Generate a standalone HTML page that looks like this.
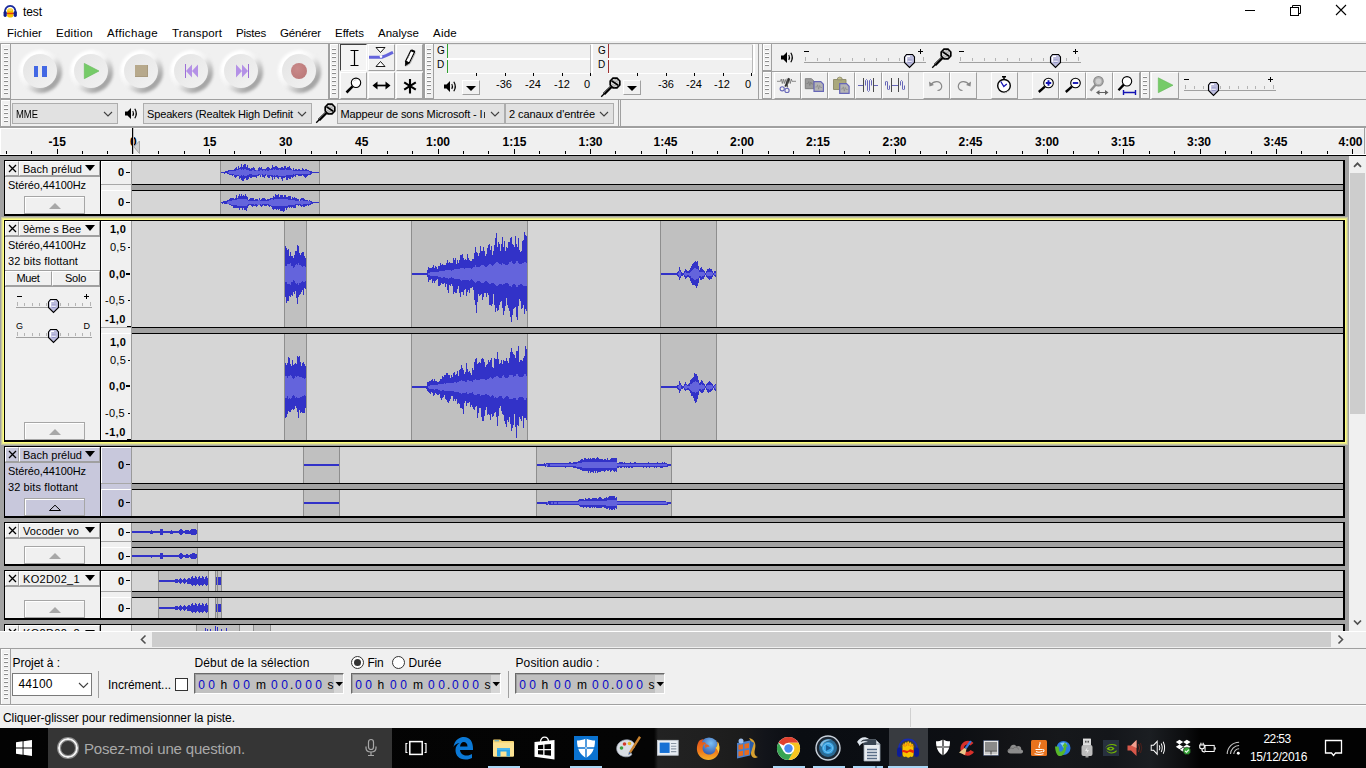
<!DOCTYPE html>
<html lang="fr"><head><meta charset="utf-8"><title>test</title>
<style>
html,body{margin:0;padding:0}
body{width:1366px;height:768px;overflow:hidden;background:#f0f0f0;position:relative;font-family:"Liberation Sans",sans-serif;font-size:12px;color:#000}
.t{position:absolute;white-space:nowrap}
.a{position:absolute}
.combo{position:absolute;background:#e1e1e1;border:1px solid #adadad;box-sizing:border-box}
.grab{position:absolute;box-sizing:border-box;border:1px solid #a0a0a0;background:#f0f0f0;box-shadow:inset 1px 1px 0 #fff}
.tb{position:absolute;box-sizing:border-box;border:1px solid #a0a0a0}
.btn{position:absolute;box-sizing:border-box;background:#f0f0f0;border:1px solid;border-color:#fff #a0a0a0 #a0a0a0 #fff}
.rb{position:absolute;width:34px;height:34px;border-radius:50%;background:linear-gradient(135deg,#e6e6e6 15%,#f0f0f0 85%)}
.rbo{position:absolute;width:43px;height:43px;border-radius:50%;background:linear-gradient(135deg,#ffffff 25%,#f2f2f2 50%,#a4a4a4 78%);filter:blur(1.5px)}
</style></head>
<body>
<div style="position:absolute;left:0px;top:0px;width:1366px;height:41px;background:#fff"></div>
<svg style="position:absolute;left:3px;top:5px;" width="15" height="14" viewBox="0 0 15 14"><g transform="scale(0.9)">
<path d="M2.2 10.5 C1.2 3.5 5 1 8 1 C11 1 14.8 3.5 13.8 10.5" fill="none" stroke="#1a2a9c" stroke-width="2"/>
<rect x="4.6" y="4.2" width="6.8" height="9.6" rx="2.2" fill="#f7c400"/>
<rect x="5.4" y="3.6" width="5.2" height="3" rx="1.5" fill="#f9d84a"/>
<rect x="3.8" y="8.6" width="8.4" height="1.6" fill="#e8380d"/>
<rect x="0.6" y="6.6" width="3.6" height="6.6" rx="1.7" fill="#12208c"/>
<rect x="11.8" y="6.6" width="3.6" height="6.6" rx="1.7" fill="#12208c"/></g>
</svg>
<div class="t" style="left:23px;top:5px;font-size:12px;line-height:14px;color:#000;letter-spacing:-0.085px;">test</div>
<div style="position:absolute;left:1245px;top:10px;width:10px;height:1px;background:#000"></div>
<svg style="position:absolute;left:1289px;top:4px;" width="13" height="13" viewBox="0 0 13 13"><path d="M3.5 3.5 V1.5 H11.5 V9.5 H9.5" fill="none" stroke="#000" stroke-width="1"/><rect x="1.5" y="3.5" width="8" height="8" fill="none" stroke="#000" stroke-width="1"/></svg>
<svg style="position:absolute;left:1335px;top:4px;" width="12" height="12" viewBox="0 0 12 12"><path d="M1 1 L11 11 M11 1 L1 11" fill="none" stroke="#000" stroke-width="1.1"/></svg>
<div class="t" style="left:7px;top:27px;font-size:11.5px;line-height:12px;color:#000;letter-spacing:0.070px;">Fichier</div>
<div class="t" style="left:56px;top:27px;font-size:11.5px;line-height:12px;color:#000;letter-spacing:0.262px;">Edition</div>
<div class="t" style="left:107px;top:27px;font-size:11.5px;line-height:12px;color:#000;letter-spacing:0.362px;">Affichage</div>
<div class="t" style="left:172px;top:27px;font-size:11.5px;line-height:12px;color:#000;letter-spacing:0.135px;">Transport</div>
<div class="t" style="left:236px;top:27px;font-size:11.5px;line-height:12px;color:#000;letter-spacing:-0.219px;">Pistes</div>
<div class="t" style="left:280px;top:27px;font-size:11.5px;line-height:12px;color:#000;letter-spacing:-0.170px;">Générer</div>
<div class="t" style="left:335px;top:27px;font-size:11.5px;line-height:12px;color:#000;letter-spacing:-0.032px;">Effets</div>
<div class="t" style="left:378px;top:27px;font-size:11.5px;line-height:12px;color:#000;letter-spacing:0.012px;">Analyse</div>
<div class="t" style="left:433px;top:27px;font-size:11.5px;line-height:12px;color:#000;letter-spacing:0.246px;">Aide</div>
<div style="position:absolute;left:0px;top:43px;width:1366px;height:1px;background:#a0a0a0"></div>
<div style="position:absolute;left:0px;top:43px;width:329px;height:57px;border:1px solid #a0a0a0;box-sizing:border-box"></div>
<div class="grab" style="left:0px;top:43px;width:11px;height:56px"><div class="a" style="left:3px;top:5px;width:4px;height:1px;background:#8c8c8c"></div><div class="a" style="left:3px;top:4px;width:4px;height:1px;background:#fff"></div><div class="a" style="left:3px;top:9px;width:4px;height:1px;background:#8c8c8c"></div><div class="a" style="left:3px;top:8px;width:4px;height:1px;background:#fff"></div><div class="a" style="left:3px;top:13px;width:4px;height:1px;background:#8c8c8c"></div><div class="a" style="left:3px;top:12px;width:4px;height:1px;background:#fff"></div><div class="a" style="left:3px;top:17px;width:4px;height:1px;background:#8c8c8c"></div><div class="a" style="left:3px;top:16px;width:4px;height:1px;background:#fff"></div><div class="a" style="left:3px;top:21px;width:4px;height:1px;background:#8c8c8c"></div><div class="a" style="left:3px;top:20px;width:4px;height:1px;background:#fff"></div><div class="a" style="left:3px;top:25px;width:4px;height:1px;background:#8c8c8c"></div><div class="a" style="left:3px;top:24px;width:4px;height:1px;background:#fff"></div><div class="a" style="left:3px;top:29px;width:4px;height:1px;background:#8c8c8c"></div><div class="a" style="left:3px;top:28px;width:4px;height:1px;background:#fff"></div><div class="a" style="left:3px;top:33px;width:4px;height:1px;background:#8c8c8c"></div><div class="a" style="left:3px;top:32px;width:4px;height:1px;background:#fff"></div><div class="a" style="left:3px;top:37px;width:4px;height:1px;background:#8c8c8c"></div><div class="a" style="left:3px;top:36px;width:4px;height:1px;background:#fff"></div><div class="a" style="left:3px;top:41px;width:4px;height:1px;background:#8c8c8c"></div><div class="a" style="left:3px;top:40px;width:4px;height:1px;background:#fff"></div><div class="a" style="left:3px;top:45px;width:4px;height:1px;background:#8c8c8c"></div><div class="a" style="left:3px;top:44px;width:4px;height:1px;background:#fff"></div><div class="a" style="left:3px;top:49px;width:4px;height:1px;background:#8c8c8c"></div><div class="a" style="left:3px;top:48px;width:4px;height:1px;background:#fff"></div></div>
<div class="rbo" style="left:19px;top:50px"></div><div class="rb" style="left:23px;top:54px"></div>
<div class="rbo" style="left:70px;top:50px"></div><div class="rb" style="left:74px;top:54px"></div>
<div class="rbo" style="left:120px;top:50px"></div><div class="rb" style="left:124px;top:54px"></div>
<div class="rbo" style="left:170px;top:50px"></div><div class="rb" style="left:174px;top:54px"></div>
<div class="rbo" style="left:220px;top:50px"></div><div class="rb" style="left:224px;top:54px"></div>
<div class="rbo" style="left:278px;top:50px"></div><div class="rb" style="left:282px;top:54px"></div>
<div style="position:absolute;left:34px;top:66px;width:4px;height:11px;background:#4368e4"></div>
<div style="position:absolute;left:42px;top:66px;width:5px;height:11px;background:#4368e4"></div>
<svg style="position:absolute;left:82px;top:61px;" width="20" height="20" viewBox="0 0 20 20"><path d="M2.3 2.4 L17 10 L2.3 17.7 Z" fill="#76cb68" stroke="#62b855" stroke-width="0.6"/></svg>
<div style="position:absolute;left:135px;top:65px;width:13px;height:12px;background:#b7a98c;border-bottom:1px solid #a89a7e;border-right:1px solid #a89a7e;box-sizing:border-box"></div>
<svg style="position:absolute;left:183px;top:62px;" width="18" height="18" viewBox="0 0 18 18"><path d="M2.5 2 V16" stroke="#9d6fd8" stroke-width="1"/><path d="M3 9 L9 2.5 V15.5 Z M9 9 L15 2.5 V15.5 Z" fill="#b491e6"/></svg>
<svg style="position:absolute;left:233px;top:62px;" width="18" height="18" viewBox="0 0 18 18"><path d="M15.5 2 V16" stroke="#9d6fd8" stroke-width="1"/><path d="M15 9 L9 2.5 V15.5 Z M9 9 L3 2.5 V15.5 Z" fill="#b491e6"/></svg>
<div class="a" style="left:291px;top:63px;width:16px;height:16px;border-radius:50%;background:radial-gradient(circle at 40% 35%,#c98a8a,#bd7b7b 70%,#a86a6a)"></div>
<div style="position:absolute;left:329px;top:43px;width:95px;height:57px;border:1px solid #a0a0a0;box-sizing:border-box"></div>
<div class="grab" style="left:329px;top:43px;width:10px;height:56px"><div class="a" style="left:2px;top:5px;width:4px;height:1px;background:#8c8c8c"></div><div class="a" style="left:2px;top:4px;width:4px;height:1px;background:#fff"></div><div class="a" style="left:2px;top:9px;width:4px;height:1px;background:#8c8c8c"></div><div class="a" style="left:2px;top:8px;width:4px;height:1px;background:#fff"></div><div class="a" style="left:2px;top:13px;width:4px;height:1px;background:#8c8c8c"></div><div class="a" style="left:2px;top:12px;width:4px;height:1px;background:#fff"></div><div class="a" style="left:2px;top:17px;width:4px;height:1px;background:#8c8c8c"></div><div class="a" style="left:2px;top:16px;width:4px;height:1px;background:#fff"></div><div class="a" style="left:2px;top:21px;width:4px;height:1px;background:#8c8c8c"></div><div class="a" style="left:2px;top:20px;width:4px;height:1px;background:#fff"></div><div class="a" style="left:2px;top:25px;width:4px;height:1px;background:#8c8c8c"></div><div class="a" style="left:2px;top:24px;width:4px;height:1px;background:#fff"></div><div class="a" style="left:2px;top:29px;width:4px;height:1px;background:#8c8c8c"></div><div class="a" style="left:2px;top:28px;width:4px;height:1px;background:#fff"></div><div class="a" style="left:2px;top:33px;width:4px;height:1px;background:#8c8c8c"></div><div class="a" style="left:2px;top:32px;width:4px;height:1px;background:#fff"></div><div class="a" style="left:2px;top:37px;width:4px;height:1px;background:#8c8c8c"></div><div class="a" style="left:2px;top:36px;width:4px;height:1px;background:#fff"></div><div class="a" style="left:2px;top:41px;width:4px;height:1px;background:#8c8c8c"></div><div class="a" style="left:2px;top:40px;width:4px;height:1px;background:#fff"></div><div class="a" style="left:2px;top:45px;width:4px;height:1px;background:#8c8c8c"></div><div class="a" style="left:2px;top:44px;width:4px;height:1px;background:#fff"></div><div class="a" style="left:2px;top:49px;width:4px;height:1px;background:#8c8c8c"></div><div class="a" style="left:2px;top:48px;width:4px;height:1px;background:#fff"></div></div>
<div style="position:absolute;left:340px;top:44px;width:27px;height:27px;box-sizing:border-box;background:#f4f4f4;border:1px solid;border-color:#404040 #fff #fff #404040"></div>
<div class="btn" style="position:absolute;left:368px;top:44px;width:27px;height:27px;"></div>
<div class="btn" style="position:absolute;left:396px;top:44px;width:27px;height:27px;"></div>
<div class="btn" style="position:absolute;left:340px;top:72px;width:27px;height:27px;"></div>
<div class="btn" style="position:absolute;left:368px;top:72px;width:27px;height:27px;"></div>
<div class="btn" style="position:absolute;left:396px;top:72px;width:27px;height:27px;"></div>
<svg style="position:absolute;left:340px;top:44px;" width="27" height="27" viewBox="0 0 27 27"><path d="M10.5 6.5 H18.5 M10.5 21.5 H18.5 M14.5 6.5 V21.5" stroke="#000" stroke-width="1.2" fill="none"/></svg>
<svg style="position:absolute;left:368px;top:44px;" width="27" height="27" viewBox="0 0 27 27"><path d="M8 3.500 H17 L12.500 8.500 Z M8 22.500 H17 L12.500 17.500 Z" fill="#fff" stroke="#000" stroke-width="0.900"/><path d="M1 13.300 H12.500 C16 13.300 20 10.500 25 8.300" stroke="#6464dc" stroke-width="3" fill="none"/><circle cx="13" cy="12.600" r="1.300" fill="#fff"/></svg>
<svg style="position:absolute;left:396px;top:44px;" width="27" height="27" viewBox="0 0 27 27"><path d="M14.800 6.500 L18.500 8.300 L13.300 19 L9.600 17.200 Z" fill="#fff" stroke="#000" stroke-width="1.200"/><path d="M9.600 17.200 L13.300 19 L9.400 21.800 Z" fill="#000" stroke="#000" stroke-width="0.800"/><path d="M15.300 6 L19 7.800" stroke="#000" stroke-width="1.800"/><path d="M12.500 11 L14 11.800 M11.500 13 L13 13.800" stroke="#909090" stroke-width="0.700"/><path d="M19.300 9 L14.200 19.500 L10.500 22" stroke="#a0a0a0" stroke-width="0.800" fill="none"/></svg>
<svg style="position:absolute;left:340px;top:72px;" width="27" height="27" viewBox="0 0 27 27"><path d="M12.600 14.300 L6.500 20.500" stroke="#000" stroke-width="2.500"/><circle cx="16" cy="10.800" r="4.700" fill="#fff" stroke="#000" stroke-width="1.100"/><path d="M13.500 9.500 Q14.500 7.500 16.500 7.800" stroke="#c0c0c0" stroke-width="0.800" fill="none"/></svg>
<svg style="position:absolute;left:368px;top:72px;" width="27" height="27" viewBox="0 0 27 27"><path d="M6 13.500 H21" stroke="#000" stroke-width="1.700"/><path d="M4.500 13.500 L9.500 9.500 V17.500 Z M22.500 13.500 L17.500 9.500 V17.500 Z" fill="#000"/></svg>
<svg style="position:absolute;left:396px;top:72px;" width="27" height="27" viewBox="0 0 27 27"><path d="M14 7 V21.500 M8.200 10.300 L19.800 17.700 M19.800 10.300 L8.200 17.700" stroke="#000" stroke-width="2.100" fill="none"/></svg>
<div style="position:absolute;left:424px;top:43px;width:335px;height:57px;border:1px solid #a0a0a0;box-sizing:border-box"></div>
<div class="grab" style="left:424px;top:43px;width:10px;height:56px"><div class="a" style="left:2px;top:5px;width:4px;height:1px;background:#8c8c8c"></div><div class="a" style="left:2px;top:4px;width:4px;height:1px;background:#fff"></div><div class="a" style="left:2px;top:9px;width:4px;height:1px;background:#8c8c8c"></div><div class="a" style="left:2px;top:8px;width:4px;height:1px;background:#fff"></div><div class="a" style="left:2px;top:13px;width:4px;height:1px;background:#8c8c8c"></div><div class="a" style="left:2px;top:12px;width:4px;height:1px;background:#fff"></div><div class="a" style="left:2px;top:17px;width:4px;height:1px;background:#8c8c8c"></div><div class="a" style="left:2px;top:16px;width:4px;height:1px;background:#fff"></div><div class="a" style="left:2px;top:21px;width:4px;height:1px;background:#8c8c8c"></div><div class="a" style="left:2px;top:20px;width:4px;height:1px;background:#fff"></div><div class="a" style="left:2px;top:25px;width:4px;height:1px;background:#8c8c8c"></div><div class="a" style="left:2px;top:24px;width:4px;height:1px;background:#fff"></div><div class="a" style="left:2px;top:29px;width:4px;height:1px;background:#8c8c8c"></div><div class="a" style="left:2px;top:28px;width:4px;height:1px;background:#fff"></div><div class="a" style="left:2px;top:33px;width:4px;height:1px;background:#8c8c8c"></div><div class="a" style="left:2px;top:32px;width:4px;height:1px;background:#fff"></div><div class="a" style="left:2px;top:37px;width:4px;height:1px;background:#8c8c8c"></div><div class="a" style="left:2px;top:36px;width:4px;height:1px;background:#fff"></div><div class="a" style="left:2px;top:41px;width:4px;height:1px;background:#8c8c8c"></div><div class="a" style="left:2px;top:40px;width:4px;height:1px;background:#fff"></div><div class="a" style="left:2px;top:45px;width:4px;height:1px;background:#8c8c8c"></div><div class="a" style="left:2px;top:44px;width:4px;height:1px;background:#fff"></div><div class="a" style="left:2px;top:49px;width:4px;height:1px;background:#8c8c8c"></div><div class="a" style="left:2px;top:48px;width:4px;height:1px;background:#fff"></div></div>
<div class="t" style="left:437px;top:45px;font-size:10px;line-height:11px;color:#000;">G</div><div class="t" style="left:437px;top:59px;font-size:10px;line-height:11px;color:#000;">D</div><div style="position:absolute;left:447px;top:58px;width:146px;height:2px;background:#fff"></div><div style="position:absolute;left:447px;top:73px;width:146px;height:1px;background:#fff"></div><div style="position:absolute;left:591px;top:44px;width:2px;height:30px;background:#fff"></div><div style="position:absolute;left:590px;top:44px;width:1px;height:29px;background:#b8b8b8"></div><div style="position:absolute;left:447px;top:44px;width:144px;height:1px;background:#e4e4e4"></div><div style="position:absolute;left:447px;top:44px;width:1px;height:14px;background:#2ea02e"></div><div style="position:absolute;left:447px;top:60px;width:1px;height:13px;background:#2ea02e"></div>
<div class="t" style="left:598px;top:45px;font-size:10px;line-height:11px;color:#000;">G</div><div class="t" style="left:598px;top:59px;font-size:10px;line-height:11px;color:#000;">D</div><div style="position:absolute;left:608px;top:58px;width:147px;height:2px;background:#fff"></div><div style="position:absolute;left:608px;top:73px;width:147px;height:1px;background:#fff"></div><div style="position:absolute;left:753px;top:44px;width:2px;height:30px;background:#fff"></div><div style="position:absolute;left:752px;top:44px;width:1px;height:29px;background:#b8b8b8"></div><div style="position:absolute;left:608px;top:44px;width:145px;height:1px;background:#e4e4e4"></div><div style="position:absolute;left:608px;top:44px;width:1px;height:14px;background:#a03030"></div><div style="position:absolute;left:608px;top:60px;width:1px;height:13px;background:#a03030"></div>
<div style="position:absolute;left:476px;top:73px;width:1px;height:3px;background:#000"></div>
<div style="position:absolute;left:505px;top:73px;width:1px;height:3px;background:#000"></div>
<div style="position:absolute;left:533px;top:73px;width:1px;height:3px;background:#000"></div>
<div style="position:absolute;left:562px;top:73px;width:1px;height:3px;background:#000"></div>
<div style="position:absolute;left:590px;top:73px;width:1px;height:3px;background:#000"></div>
<div style="position:absolute;left:637px;top:73px;width:1px;height:3px;background:#000"></div>
<div style="position:absolute;left:666px;top:73px;width:1px;height:3px;background:#000"></div>
<div style="position:absolute;left:694px;top:73px;width:1px;height:3px;background:#000"></div>
<div style="position:absolute;left:723px;top:73px;width:1px;height:3px;background:#000"></div>
<div style="position:absolute;left:751px;top:73px;width:1px;height:3px;background:#000"></div>
<div class="t" style="left:496px;top:78px;font-size:11px;line-height:12px;color:#000;">-36</div>
<div class="t" style="left:525px;top:78px;font-size:11px;line-height:12px;color:#000;">-24</div>
<div class="t" style="left:554px;top:78px;font-size:11px;line-height:12px;color:#000;">-12</div>
<div class="t" style="left:584px;top:78px;font-size:11px;line-height:12px;color:#000;">0</div>
<div class="t" style="left:658px;top:78px;font-size:11px;line-height:12px;color:#000;">-36</div>
<div class="t" style="left:686px;top:78px;font-size:11px;line-height:12px;color:#000;">-24</div>
<div class="t" style="left:714px;top:78px;font-size:11px;line-height:12px;color:#000;">-12</div>
<div class="t" style="left:745px;top:78px;font-size:11px;line-height:12px;color:#000;">0</div>
<svg style="position:absolute;left:443px;top:80px;" width="15" height="13" viewBox="0 0 15 13"><path d="M1 4.5 H3.5 L7 1 V12 L3.5 8.5 H1 Z" fill="#000"/><path d="M8.8 4 Q10.2 6.5 8.8 9" stroke="#000" stroke-width="1.1" fill="none"/><path d="M10.8 1.8 Q13.8 6.5 10.8 11.2" stroke="#000" stroke-width="1.2" fill="none"/></svg>
<svg style="position:absolute;left:600px;top:77px;" width="21" height="21" viewBox="0 0 21 21"><path d="M11.300 9.700 L4 17" stroke="#000" stroke-width="3"/><path d="M4.500 16.500 L1.200 19.800" stroke="#000" stroke-width="1.300"/><path d="M10.600 9.400 L3.800 16.200" stroke="#fff" stroke-width="0.700" stroke-dasharray="0.800 0.800"/><path d="M13 1.200 H17 L19.800 4 V8 L17 10.800 H13 L10.200 8 V4 Z" fill="#e0e0e0" stroke="#000" stroke-width="1.700"/><path d="M11.600 3.800 L18.200 8.200" stroke="#000" stroke-width="1.900"/><path d="M12.500 3.300 L18.300 5.300 M14.300 2.200 L18.500 3.700 M11.500 7.300 L17 9.200 M12.800 9.200 L15 10" stroke="#8c8c8c" stroke-width="0.700"/></svg>
<div style="position:absolute;left:462px;top:80px;width:18px;height:15px;box-sizing:border-box;border:1px solid;border-color:#fff #a0a0a0 #a0a0a0 #fff"><div class="a" style="left:3px;top:5px;width:0;height:0;border-left:5px solid transparent;border-right:5px solid transparent;border-top:5px solid #000"></div></div>
<div style="position:absolute;left:623px;top:80px;width:18px;height:15px;box-sizing:border-box;border:1px solid;border-color:#fff #a0a0a0 #a0a0a0 #fff"><div class="a" style="left:3px;top:5px;width:0;height:0;border-left:5px solid transparent;border-right:5px solid transparent;border-top:5px solid #000"></div></div>
<div style="position:absolute;left:762px;top:43px;width:604px;height:29px;border:1px solid #a0a0a0;border-right:none;box-sizing:border-box"></div>
<div class="grab" style="left:762px;top:43px;width:10px;height:28px"><div class="a" style="left:2px;top:5px;width:4px;height:1px;background:#8c8c8c"></div><div class="a" style="left:2px;top:4px;width:4px;height:1px;background:#fff"></div><div class="a" style="left:2px;top:9px;width:4px;height:1px;background:#8c8c8c"></div><div class="a" style="left:2px;top:8px;width:4px;height:1px;background:#fff"></div><div class="a" style="left:2px;top:13px;width:4px;height:1px;background:#8c8c8c"></div><div class="a" style="left:2px;top:12px;width:4px;height:1px;background:#fff"></div><div class="a" style="left:2px;top:17px;width:4px;height:1px;background:#8c8c8c"></div><div class="a" style="left:2px;top:16px;width:4px;height:1px;background:#fff"></div><div class="a" style="left:2px;top:21px;width:4px;height:1px;background:#8c8c8c"></div><div class="a" style="left:2px;top:20px;width:4px;height:1px;background:#fff"></div></div>
<svg style="position:absolute;left:780px;top:51px;" width="15" height="13" viewBox="0 0 15 13"><path d="M1 4.5 H3.5 L7 1 V12 L3.5 8.5 H1 Z" fill="#000"/><path d="M8.8 4 Q10.2 6.5 8.8 9" stroke="#000" stroke-width="1.1" fill="none"/><path d="M10.8 1.8 Q13.8 6.5 10.8 11.2" stroke="#000" stroke-width="1.2" fill="none"/></svg>
<svg style="position:absolute;left:931px;top:48px;" width="21" height="21" viewBox="0 0 21 21"><path d="M11.300 9.700 L4 17" stroke="#000" stroke-width="3"/><path d="M4.500 16.500 L1.200 19.800" stroke="#000" stroke-width="1.300"/><path d="M10.600 9.400 L3.800 16.200" stroke="#fff" stroke-width="0.700" stroke-dasharray="0.800 0.800"/><path d="M13 1.200 H17 L19.800 4 V8 L17 10.800 H13 L10.200 8 V4 Z" fill="#e0e0e0" stroke="#000" stroke-width="1.700"/><path d="M11.600 3.800 L18.200 8.200" stroke="#000" stroke-width="1.900"/><path d="M12.500 3.300 L18.300 5.300 M14.300 2.200 L18.500 3.700 M11.500 7.300 L17 9.200 M12.800 9.200 L15 10" stroke="#8c8c8c" stroke-width="0.700"/></svg>
<div style="position:absolute;left:804px;top:62px;width:122px;height:1px;background:#a0a0a0"></div><div style="position:absolute;left:805px;top:57px;width:1px;height:4px;background:#b4b4b4"></div><div style="position:absolute;left:817px;top:58px;width:1px;height:3px;background:#b4b4b4"></div><div style="position:absolute;left:829px;top:58px;width:1px;height:3px;background:#b4b4b4"></div><div style="position:absolute;left:840px;top:58px;width:1px;height:3px;background:#b4b4b4"></div><div style="position:absolute;left:852px;top:58px;width:1px;height:3px;background:#b4b4b4"></div><div style="position:absolute;left:864px;top:58px;width:1px;height:3px;background:#b4b4b4"></div><div style="position:absolute;left:876px;top:58px;width:1px;height:3px;background:#b4b4b4"></div><div style="position:absolute;left:888px;top:58px;width:1px;height:3px;background:#b4b4b4"></div><div style="position:absolute;left:899px;top:58px;width:1px;height:3px;background:#b4b4b4"></div><div style="position:absolute;left:911px;top:58px;width:1px;height:3px;background:#b4b4b4"></div><div style="position:absolute;left:923px;top:57px;width:1px;height:4px;background:#b4b4b4"></div><div style="position:absolute;left:804px;top:51px;width:5px;height:1px;background:#000"></div><div style="position:absolute;left:918px;top:51px;width:5px;height:1px;background:#000"></div><div style="position:absolute;left:920px;top:49px;width:1px;height:5px;background:#000"></div><svg style="position:absolute;left:903px;top:53px;" width="13" height="16" viewBox="0 0 13 16"><path d="M1.500 4 L3.500 1.500 H9.500 L11.500 4 V9.500 L6.500 14.500 L1.500 9.500 Z" fill="#bcbcdc" stroke="#000" stroke-width="1.100"/><path d="M2.700 4.300 L4 2.700 H7 V4 H4.200 V9.500 L2.700 8.500 Z" fill="#fff"/><path d="M4.700 7 H8.700 M4.700 9.500 H8.700" stroke="#9292c4" stroke-width="0.900"/><path d="M4.700 8.250 H8.700" stroke="#f4f4fc" stroke-width="1"/></svg>
<div style="position:absolute;left:959px;top:62px;width:122px;height:1px;background:#a0a0a0"></div><div style="position:absolute;left:960px;top:57px;width:1px;height:4px;background:#b4b4b4"></div><div style="position:absolute;left:972px;top:58px;width:1px;height:3px;background:#b4b4b4"></div><div style="position:absolute;left:984px;top:58px;width:1px;height:3px;background:#b4b4b4"></div><div style="position:absolute;left:995px;top:58px;width:1px;height:3px;background:#b4b4b4"></div><div style="position:absolute;left:1007px;top:58px;width:1px;height:3px;background:#b4b4b4"></div><div style="position:absolute;left:1019px;top:58px;width:1px;height:3px;background:#b4b4b4"></div><div style="position:absolute;left:1031px;top:58px;width:1px;height:3px;background:#b4b4b4"></div><div style="position:absolute;left:1043px;top:58px;width:1px;height:3px;background:#b4b4b4"></div><div style="position:absolute;left:1054px;top:58px;width:1px;height:3px;background:#b4b4b4"></div><div style="position:absolute;left:1066px;top:58px;width:1px;height:3px;background:#b4b4b4"></div><div style="position:absolute;left:1078px;top:57px;width:1px;height:4px;background:#b4b4b4"></div><div style="position:absolute;left:959px;top:51px;width:5px;height:1px;background:#000"></div><div style="position:absolute;left:1073px;top:51px;width:5px;height:1px;background:#000"></div><div style="position:absolute;left:1075px;top:49px;width:1px;height:5px;background:#000"></div><svg style="position:absolute;left:1049px;top:53px;" width="13" height="16" viewBox="0 0 13 16"><path d="M1.500 4 L3.500 1.500 H9.500 L11.500 4 V9.500 L6.500 14.500 L1.500 9.500 Z" fill="#bcbcdc" stroke="#000" stroke-width="1.100"/><path d="M2.700 4.300 L4 2.700 H7 V4 H4.200 V9.500 L2.700 8.500 Z" fill="#fff"/><path d="M4.700 7 H8.700 M4.700 9.500 H8.700" stroke="#9292c4" stroke-width="0.900"/><path d="M4.700 8.250 H8.700" stroke="#f4f4fc" stroke-width="1"/></svg>
<div style="position:absolute;left:762px;top:71px;width:379px;height:29px;border:1px solid #a0a0a0;box-sizing:border-box"></div>
<div class="grab" style="left:762px;top:71px;width:10px;height:28px"><div class="a" style="left:2px;top:5px;width:4px;height:1px;background:#8c8c8c"></div><div class="a" style="left:2px;top:4px;width:4px;height:1px;background:#fff"></div><div class="a" style="left:2px;top:9px;width:4px;height:1px;background:#8c8c8c"></div><div class="a" style="left:2px;top:8px;width:4px;height:1px;background:#fff"></div><div class="a" style="left:2px;top:13px;width:4px;height:1px;background:#8c8c8c"></div><div class="a" style="left:2px;top:12px;width:4px;height:1px;background:#fff"></div><div class="a" style="left:2px;top:17px;width:4px;height:1px;background:#8c8c8c"></div><div class="a" style="left:2px;top:16px;width:4px;height:1px;background:#fff"></div><div class="a" style="left:2px;top:21px;width:4px;height:1px;background:#8c8c8c"></div><div class="a" style="left:2px;top:20px;width:4px;height:1px;background:#fff"></div></div>
<div class="btn" style="position:absolute;left:774px;top:72px;width:27px;height:27px;"></div>
<div class="btn" style="position:absolute;left:801px;top:72px;width:27px;height:27px;"></div>
<div class="btn" style="position:absolute;left:828px;top:72px;width:27px;height:27px;"></div>
<div class="btn" style="position:absolute;left:855px;top:72px;width:27px;height:27px;"></div>
<div class="btn" style="position:absolute;left:882px;top:72px;width:27px;height:27px;"></div>
<div class="btn" style="position:absolute;left:923px;top:72px;width:27px;height:27px;"></div>
<div class="btn" style="position:absolute;left:950px;top:72px;width:27px;height:27px;"></div>
<div class="btn" style="position:absolute;left:991px;top:72px;width:27px;height:27px;"></div>
<div class="btn" style="position:absolute;left:1032px;top:72px;width:27px;height:27px;"></div>
<div class="btn" style="position:absolute;left:1059px;top:72px;width:27px;height:27px;"></div>
<div class="btn" style="position:absolute;left:1086px;top:72px;width:27px;height:27px;"></div>
<div class="btn" style="position:absolute;left:1113px;top:72px;width:27px;height:27px;"></div>
<svg style="position:absolute;left:774px;top:72px;" width="27" height="26" viewBox="0 0 27 26"><path d="M3 9.300 H6.500 L7.300 7 L8.300 11.500 L9.300 7 L10.300 11.500 L11.300 7.500 L12.300 11 L13.300 7.500 L14.300 11.500 L15.300 7 L16.300 11.500 L17.300 7 L18 9.300 H22" stroke="#707070" stroke-width="0.800" fill="none"/><path d="M15.200 6.300 L11.300 14.600" stroke="#303030" stroke-width="2"/><path d="M13.200 6.500 L13.600 15.500" stroke="#505050" stroke-width="0.900"/><circle cx="8.200" cy="16.800" r="2.100" fill="#f0f0f0" stroke="#6666b8" stroke-width="1.100"/><circle cx="13" cy="18.400" r="2.100" fill="#f0f0f0" stroke="#6666b8" stroke-width="1.100"/></svg>
<svg style="position:absolute;left:801px;top:72px;" width="27" height="26" viewBox="0 0 27 26"><path d="M4.300 6.700 H10.500 L12.800 9 V16.700 H4.300 Z" fill="#9c9c9c" stroke="#787878" stroke-width="0.900"/><path d="M5.500 11.500 H7 L7.800 9.500 L8.800 13.500 L9.800 10 L10.800 12 H12" stroke="#7c7c7c" stroke-width="0.700" fill="none"/><path d="M13 9.700 H19.800 L22.400 12.300 V19.300 H13 Z" fill="#b4b4b4" stroke="#6666b8" stroke-width="1.200"/><path d="M14.300 15 H15.800 L16.600 12.800 L17.600 17.200 L18.600 13.500 L19.600 15.500 H21" stroke="#8a8a8a" stroke-width="0.700" fill="none"/></svg>
<svg style="position:absolute;left:828px;top:72px;" width="27" height="26" viewBox="0 0 27 26"><path d="M5.500 7.500 H18 V17.500 H5.500 Z" fill="#aaa87c" stroke="#8a8868" stroke-width="0.900"/><path d="M9.500 7.800 V6 Q11.750 4 14 6 V7.800 Z" fill="#c4c08c" stroke="#8a8868" stroke-width="0.800"/><path d="M11.700 11.700 H18.500 L21.100 14.300 V21.300 H11.700 Z" fill="#b4b4b4" stroke="#6666b8" stroke-width="1.200"/><path d="M13 17 H14.500 L15.300 14.800 L16.300 19.200 L17.300 15.500 L18.300 17.500 H19.700" stroke="#8a8a8a" stroke-width="0.700" fill="none"/></svg>
<svg style="position:absolute;left:855px;top:72px;" width="27" height="26" viewBox="0 0 27 26"><path d="M3 13.500 H8.500 M18.500 13.500 H23" stroke="#6666b8" stroke-width="1"/><path d="M8.500 6 V20 M18.500 6 V20" stroke="#4a4a4a" stroke-width="1"/><path d="M10.500 13.500 V8.500 Q11.500 6.500 12.500 8.500 V18.500 Q13.500 20.500 14.500 18.500 V8.500 Q15.500 6.500 16.500 8.500 V13.500" stroke="#6666b8" stroke-width="1" fill="none"/></svg>
<svg style="position:absolute;left:882px;top:72px;" width="27" height="26" viewBox="0 0 27 26"><path d="M9.500 13.500 H16.500" stroke="#6666b8" stroke-width="1"/><path d="M9.500 6 V20 M16.500 6 V20" stroke="#4a4a4a" stroke-width="1"/><path d="M3.500 13.500 V10 Q4.500 8 5.500 10 V17 Q6.500 19 7.500 17 V13.500 M18.500 13.500 V9.500 Q19.500 7.500 20.500 9.500 V17 Q21.500 19 22.500 17 V13.500" stroke="#6666b8" stroke-width="1" fill="none"/></svg>
<svg style="position:absolute;left:923px;top:72px;" width="27" height="26" viewBox="0 0 27 26"><path d="M8 12.500 C11 8.500 17 8.500 18.500 13 C19.500 16 17.5 18.500 14.500 18.500" stroke="#888" stroke-width="1.2" fill="none"/><path d="M6 9.500 L6.500 14.500 L11 13 Z" fill="#888"/></svg>
<svg style="position:absolute;left:950px;top:72px;" width="27" height="26" viewBox="0 0 27 26"><path d="M19 12.500 C16 8.500 10 8.500 8.500 13 C7.500 16 9.5 18.500 12.500 18.500" stroke="#888" stroke-width="1.2" fill="none"/><path d="M21 9.500 L20.500 14.500 L16 13 Z" fill="#888"/></svg>
<svg style="position:absolute;left:991px;top:72px;" width="27" height="26" viewBox="0 0 27 26"><circle cx="13" cy="13.800" r="6.300" fill="#fff" stroke="#000" stroke-width="1.400"/><path d="M13 7.500 V5 M11 4.800 H15" stroke="#000" stroke-width="1.500"/><path d="M9.800 9.500 L12.800 14.500 L15.800 12" stroke="#1414b4" stroke-width="1.300" fill="none"/><path d="M17.500 18.500 Q16 20.500 13.500 21" stroke="#b0b0b0" stroke-width="1" fill="none"/></svg>
<svg style="position:absolute;left:1032px;top:72px;" width="27" height="26" viewBox="0 0 27 26"><circle cx="16.500" cy="11" r="4.800" fill="#fff" stroke="#000" stroke-width="1.100"/><path d="M12.900 14.600 L6.800 20" stroke="#000" stroke-width="2.400"/><path d="M13.800 11 H19.200 M16.500 8.300 V13.700" stroke="#1414b4" stroke-width="1.900"/></svg>
<svg style="position:absolute;left:1059px;top:72px;" width="27" height="26" viewBox="0 0 27 26"><circle cx="16.500" cy="11" r="4.800" fill="#fff" stroke="#000" stroke-width="1.100"/><path d="M12.900 14.600 L6.800 20" stroke="#000" stroke-width="2.400"/><path d="M13.800 11 H19.200" stroke="#1414b4" stroke-width="1.900"/></svg>
<svg style="position:absolute;left:1086px;top:72px;" width="27" height="26" viewBox="0 0 27 26"><path d="M9.6 12.7 L4.5 18.8" stroke="#909090" stroke-width="2.400"/><circle cx="12.5" cy="9.2" r="4.700" fill="#b0b0b0" stroke="#8a8a8a" stroke-width="1.100"/><path d="M12 20.500 H21" stroke="#606060" stroke-width="1"/><path d="M10 20.500 L13.500 18 V23 Z M22.500 20.500 L19 18 V23 Z" fill="#606060"/><circle cx="12.500" cy="9.200" r="2.800" fill="#d0d0d0"/></svg>
<svg style="position:absolute;left:1113px;top:72px;" width="27" height="26" viewBox="0 0 27 26"><path d="M10.8 12.6 L5.5 18.2" stroke="#000" stroke-width="2.400"/><circle cx="14" cy="9.3" r="4.700" fill="#fff" stroke="#000" stroke-width="1.100"/><path d="M10.500 20.500 H22.500 M10.500 18 V23 M22.500 18 V23" stroke="#1414b4" stroke-width="1.400"/></svg>
<div style="position:absolute;left:1140px;top:71px;width:226px;height:29px;border:1px solid #a0a0a0;border-right:none;box-sizing:border-box"></div>
<div class="grab" style="left:1140px;top:71px;width:10px;height:28px"><div class="a" style="left:2px;top:5px;width:4px;height:1px;background:#8c8c8c"></div><div class="a" style="left:2px;top:4px;width:4px;height:1px;background:#fff"></div><div class="a" style="left:2px;top:9px;width:4px;height:1px;background:#8c8c8c"></div><div class="a" style="left:2px;top:8px;width:4px;height:1px;background:#fff"></div><div class="a" style="left:2px;top:13px;width:4px;height:1px;background:#8c8c8c"></div><div class="a" style="left:2px;top:12px;width:4px;height:1px;background:#fff"></div><div class="a" style="left:2px;top:17px;width:4px;height:1px;background:#8c8c8c"></div><div class="a" style="left:2px;top:16px;width:4px;height:1px;background:#fff"></div><div class="a" style="left:2px;top:21px;width:4px;height:1px;background:#8c8c8c"></div><div class="a" style="left:2px;top:20px;width:4px;height:1px;background:#fff"></div></div>
<div class="btn" style="position:absolute;left:1151px;top:72px;width:28px;height:27px;"></div>
<svg style="position:absolute;left:1155px;top:75px;" width="22" height="20" viewBox="0 0 22 20"><path d="M3.300 2.800 L18 10.200 L3.300 17.700 Z" fill="#76cb68" stroke="#62b855" stroke-width="0.600"/></svg>
<div style="position:absolute;left:1184px;top:90px;width:92px;height:1px;background:#a0a0a0"></div><div style="position:absolute;left:1185px;top:85px;width:1px;height:4px;background:#b4b4b4"></div><div style="position:absolute;left:1194px;top:86px;width:1px;height:3px;background:#b4b4b4"></div><div style="position:absolute;left:1203px;top:86px;width:1px;height:3px;background:#b4b4b4"></div><div style="position:absolute;left:1211px;top:86px;width:1px;height:3px;background:#b4b4b4"></div><div style="position:absolute;left:1220px;top:86px;width:1px;height:3px;background:#b4b4b4"></div><div style="position:absolute;left:1229px;top:86px;width:1px;height:3px;background:#b4b4b4"></div><div style="position:absolute;left:1238px;top:86px;width:1px;height:3px;background:#b4b4b4"></div><div style="position:absolute;left:1247px;top:86px;width:1px;height:3px;background:#b4b4b4"></div><div style="position:absolute;left:1255px;top:86px;width:1px;height:3px;background:#b4b4b4"></div><div style="position:absolute;left:1264px;top:86px;width:1px;height:3px;background:#b4b4b4"></div><div style="position:absolute;left:1273px;top:85px;width:1px;height:4px;background:#b4b4b4"></div><div style="position:absolute;left:1184px;top:79px;width:5px;height:1px;background:#000"></div><div style="position:absolute;left:1268px;top:79px;width:5px;height:1px;background:#000"></div><div style="position:absolute;left:1270px;top:77px;width:1px;height:5px;background:#000"></div><svg style="position:absolute;left:1207px;top:81px;" width="13" height="16" viewBox="0 0 13 16"><path d="M1.500 4 L3.500 1.500 H9.500 L11.500 4 V9.500 L6.500 14.500 L1.500 9.500 Z" fill="#bcbcdc" stroke="#000" stroke-width="1.100"/><path d="M2.700 4.300 L4 2.700 H7 V4 H4.200 V9.500 L2.700 8.500 Z" fill="#fff"/><path d="M4.700 7 H8.700 M4.700 9.500 H8.700" stroke="#9292c4" stroke-width="0.900"/><path d="M4.700 8.250 H8.700" stroke="#f4f4fc" stroke-width="1"/></svg>
<div style="position:absolute;left:0px;top:99px;width:1366px;height:1px;background:#a0a0a0"></div>
<div style="position:absolute;left:0px;top:99px;width:619px;height:28px;border:1px solid #a0a0a0;box-sizing:border-box"></div>
<div class="grab" style="left:0px;top:99px;width:11px;height:28px"><div class="a" style="left:3px;top:5px;width:4px;height:1px;background:#8c8c8c"></div><div class="a" style="left:3px;top:4px;width:4px;height:1px;background:#fff"></div><div class="a" style="left:3px;top:9px;width:4px;height:1px;background:#8c8c8c"></div><div class="a" style="left:3px;top:8px;width:4px;height:1px;background:#fff"></div><div class="a" style="left:3px;top:13px;width:4px;height:1px;background:#8c8c8c"></div><div class="a" style="left:3px;top:12px;width:4px;height:1px;background:#fff"></div><div class="a" style="left:3px;top:17px;width:4px;height:1px;background:#8c8c8c"></div><div class="a" style="left:3px;top:16px;width:4px;height:1px;background:#fff"></div><div class="a" style="left:3px;top:21px;width:4px;height:1px;background:#8c8c8c"></div><div class="a" style="left:3px;top:20px;width:4px;height:1px;background:#fff"></div></div>
<div class="combo" style="left:12px;top:103px;width:106px;height:21px"></div><div class="t" style="left:16px;top:108px;font-size:11px;line-height:12px;color:#000;transform:scaleX(0.8572);transform-origin:0 0;">MME</div><svg style="position:absolute;left:103px;top:111px;" width="10" height="7" viewBox="0 0 10 7"><path d="M1 1 L5 5 L9 1" stroke="#404040" stroke-width="1.100" fill="none"/></svg>
<svg style="position:absolute;left:124px;top:107px;" width="15" height="13" viewBox="0 0 15 13"><path d="M1 4.5 H3.5 L7 1 V12 L3.5 8.5 H1 Z" fill="#000"/><path d="M8.8 4 Q10.2 6.5 8.8 9" stroke="#000" stroke-width="1.1" fill="none"/><path d="M10.8 1.8 Q13.8 6.5 10.8 11.2" stroke="#000" stroke-width="1.2" fill="none"/></svg>
<div class="combo" style="left:143px;top:103px;width:169px;height:21px"></div><div class="t" style="left:147px;top:108px;font-size:11px;line-height:12px;color:#000;letter-spacing:-0.147px;">Speakers (Realtek High Definit</div><svg style="position:absolute;left:297px;top:111px;" width="10" height="7" viewBox="0 0 10 7"><path d="M1 1 L5 5 L9 1" stroke="#404040" stroke-width="1.100" fill="none"/></svg>
<svg style="position:absolute;left:315px;top:103px;" width="21" height="21" viewBox="0 0 21 21"><path d="M11.300 9.700 L4 17" stroke="#000" stroke-width="3"/><path d="M4.500 16.500 L1.200 19.800" stroke="#000" stroke-width="1.300"/><path d="M10.600 9.400 L3.800 16.200" stroke="#fff" stroke-width="0.700" stroke-dasharray="0.800 0.800"/><path d="M13 1.200 H17 L19.800 4 V8 L17 10.800 H13 L10.200 8 V4 Z" fill="#e0e0e0" stroke="#000" stroke-width="1.700"/><path d="M11.600 3.800 L18.200 8.200" stroke="#000" stroke-width="1.900"/><path d="M12.500 3.300 L18.300 5.300 M14.300 2.200 L18.500 3.700 M11.500 7.300 L17 9.200 M12.800 9.200 L15 10" stroke="#8c8c8c" stroke-width="0.700"/></svg>
<div class="combo" style="left:337px;top:103px;width:168px;height:21px"></div><div class="t" style="left:340.5px;top:108px;font-size:11px;line-height:12px;color:#000;letter-spacing:-0.121px;">Mappeur de sons Microsoft - I</div><svg style="position:absolute;left:490px;top:111px;" width="10" height="7" viewBox="0 0 10 7"><path d="M1 1 L5 5 L9 1" stroke="#404040" stroke-width="1.100" fill="none"/></svg>
<div style="position:absolute;left:484px;top:112px;width:1px;height:6px;background:#333"></div>
<div class="combo" style="left:505px;top:103px;width:109px;height:21px"></div><div class="t" style="left:509px;top:108px;font-size:11px;line-height:12px;color:#000;letter-spacing:-0.065px;">2 canaux d'entrée</div><svg style="position:absolute;left:599px;top:111px;" width="10" height="7" viewBox="0 0 10 7"><path d="M1 1 L5 5 L9 1" stroke="#404040" stroke-width="1.100" fill="none"/></svg>
<div style="position:absolute;left:620px;top:99px;width:1px;height:28px;background:#a0a0a0"></div>
<div style="position:absolute;left:0px;top:126px;width:1366px;height:2px;background:#a0a0a0"></div>
<div style="position:absolute;left:0px;top:128px;width:1366px;height:28px;background:#f0f0f0"></div>
<div style="position:absolute;left:0px;top:128px;width:1365px;height:1px;background:#fff"></div>
<div style="position:absolute;left:0px;top:128px;width:1px;height:27px;background:#fff"></div>
<div style="position:absolute;left:1364px;top:128px;width:1px;height:27px;background:#a0a0a0"></div>
<div style="position:absolute;left:0px;top:154px;width:1366px;height:1px;background:#fff"></div>
<div style="position:absolute;left:0px;top:155px;width:1366px;height:1px;background:#000"></div>
<svg style="position:absolute;left:0px;top:128px;" width="1366" height="26" viewBox="0 0 1366 26"><rect x="6" y="23" width="1" height="3" fill="#000"/><rect x="31" y="23" width="1" height="3" fill="#000"/><rect x="57" y="21" width="1" height="5" fill="#000"/><rect x="82" y="23" width="1" height="3" fill="#000"/><rect x="107" y="23" width="1" height="3" fill="#000"/><rect x="133" y="21" width="1" height="5" fill="#000"/><rect x="158" y="23" width="1" height="3" fill="#000"/><rect x="184" y="23" width="1" height="3" fill="#000"/><rect x="209" y="21" width="1" height="5" fill="#000"/><rect x="234" y="23" width="1" height="3" fill="#000"/><rect x="260" y="23" width="1" height="3" fill="#000"/><rect x="285" y="21" width="1" height="5" fill="#000"/><rect x="311" y="23" width="1" height="3" fill="#000"/><rect x="336" y="23" width="1" height="3" fill="#000"/><rect x="361" y="21" width="1" height="5" fill="#000"/><rect x="387" y="23" width="1" height="3" fill="#000"/><rect x="412" y="23" width="1" height="3" fill="#000"/><rect x="438" y="21" width="1" height="5" fill="#000"/><rect x="463" y="23" width="1" height="3" fill="#000"/><rect x="488" y="23" width="1" height="3" fill="#000"/><rect x="514" y="21" width="1" height="5" fill="#000"/><rect x="539" y="23" width="1" height="3" fill="#000"/><rect x="565" y="23" width="1" height="3" fill="#000"/><rect x="590" y="21" width="1" height="5" fill="#000"/><rect x="615" y="23" width="1" height="3" fill="#000"/><rect x="641" y="23" width="1" height="3" fill="#000"/><rect x="666" y="21" width="1" height="5" fill="#000"/><rect x="692" y="23" width="1" height="3" fill="#000"/><rect x="717" y="23" width="1" height="3" fill="#000"/><rect x="742" y="21" width="1" height="5" fill="#000"/><rect x="768" y="23" width="1" height="3" fill="#000"/><rect x="793" y="23" width="1" height="3" fill="#000"/><rect x="819" y="21" width="1" height="5" fill="#000"/><rect x="844" y="23" width="1" height="3" fill="#000"/><rect x="869" y="23" width="1" height="3" fill="#000"/><rect x="895" y="21" width="1" height="5" fill="#000"/><rect x="920" y="23" width="1" height="3" fill="#000"/><rect x="946" y="23" width="1" height="3" fill="#000"/><rect x="971" y="21" width="1" height="5" fill="#000"/><rect x="996" y="23" width="1" height="3" fill="#000"/><rect x="1022" y="23" width="1" height="3" fill="#000"/><rect x="1047" y="21" width="1" height="5" fill="#000"/><rect x="1073" y="23" width="1" height="3" fill="#000"/><rect x="1098" y="23" width="1" height="3" fill="#000"/><rect x="1123" y="21" width="1" height="5" fill="#000"/><rect x="1149" y="23" width="1" height="3" fill="#000"/><rect x="1174" y="23" width="1" height="3" fill="#000"/><rect x="1200" y="21" width="1" height="5" fill="#000"/><rect x="1225" y="23" width="1" height="3" fill="#000"/><rect x="1251" y="23" width="1" height="3" fill="#000"/><rect x="1276" y="21" width="1" height="5" fill="#000"/><rect x="1301" y="23" width="1" height="3" fill="#000"/><rect x="1327" y="23" width="1" height="3" fill="#000"/><rect x="1352" y="21" width="1" height="5" fill="#000"/></svg>
<div class="t" style="left:48.5px;top:135px;font-size:12px;line-height:14px;color:#000;font-weight:bold;">-15</div>
<div class="t" style="left:130.0px;top:135px;font-size:12px;line-height:14px;color:#000;font-weight:bold;">0</div>
<div class="t" style="left:203.0px;top:135px;font-size:12px;line-height:14px;color:#000;font-weight:bold;">15</div>
<div class="t" style="left:279.0px;top:135px;font-size:12px;line-height:14px;color:#000;font-weight:bold;">30</div>
<div class="t" style="left:355.0px;top:135px;font-size:12px;line-height:14px;color:#000;font-weight:bold;">45</div>
<div class="t" style="left:426.0px;top:135px;font-size:12px;line-height:14px;color:#000;font-weight:bold;">1:00</div>
<div class="t" style="left:502.5px;top:135px;font-size:12px;line-height:14px;color:#000;font-weight:bold;">1:15</div>
<div class="t" style="left:578.5px;top:135px;font-size:12px;line-height:14px;color:#000;font-weight:bold;">1:30</div>
<div class="t" style="left:653.5px;top:135px;font-size:12px;line-height:14px;color:#000;font-weight:bold;">1:45</div>
<div class="t" style="left:730.0px;top:135px;font-size:12px;line-height:14px;color:#000;font-weight:bold;">2:00</div>
<div class="t" style="left:806.0px;top:135px;font-size:12px;line-height:14px;color:#000;font-weight:bold;">2:15</div>
<div class="t" style="left:882.5px;top:135px;font-size:12px;line-height:14px;color:#000;font-weight:bold;">2:30</div>
<div class="t" style="left:958.5px;top:135px;font-size:12px;line-height:14px;color:#000;font-weight:bold;">2:45</div>
<div class="t" style="left:1035.0px;top:135px;font-size:12px;line-height:14px;color:#000;font-weight:bold;">3:00</div>
<div class="t" style="left:1111.0px;top:135px;font-size:12px;line-height:14px;color:#000;font-weight:bold;">3:15</div>
<div class="t" style="left:1187.0px;top:135px;font-size:12px;line-height:14px;color:#000;font-weight:bold;">3:30</div>
<div class="t" style="left:1263.5px;top:135px;font-size:12px;line-height:14px;color:#000;font-weight:bold;">3:45</div>
<div class="t" style="left:1338.5px;top:135px;font-size:12px;line-height:14px;color:#000;font-weight:bold;">4:00</div>
<div style="position:absolute;left:132px;top:128px;width:1px;height:26px;background:#000"></div>
<div style="position:absolute;left:133px;top:128px;width:1px;height:26px;background:#c0c0c0"></div>
<svg style="position:absolute;left:133px;top:140px;" width="8" height="15" viewBox="0 0 8 15"><path d="M0.800 6.800 L6.500 1 V13.500 Z" fill="#d2d2d2" stroke="#a0a0a0" stroke-width="0.900"/></svg>
<div style="position:absolute;left:0px;top:156px;width:1349px;height:475px;background:#a2a2a2"></div>
<div style="position:absolute;left:4px;top:160px;width:1341px;height:56px;background:#000"></div><div style="position:absolute;left:5px;top:161px;width:95px;height:53px;background:#f0f0f0"></div><div style="position:absolute;left:101px;top:161px;width:30px;height:53px;background:#f0f0f0"></div><div style="position:absolute;left:101px;top:161px;width:1px;height:53px;background:#fff"></div><div style="position:absolute;left:101px;top:161px;width:30px;height:1px;background:#fff"></div><div style="position:absolute;left:131px;top:161px;width:1px;height:53px;background:#9a9a9a"></div><div style="position:absolute;left:101px;top:184px;width:30px;height:1px;background:#a8a8a8"></div><div style="position:absolute;left:101px;top:185px;width:30px;height:5px;background:#f0f0f0"></div><div style="position:absolute;left:101px;top:190px;width:30px;height:1px;background:#fff"></div><div style="position:absolute;left:132px;top:161px;width:1211px;height:23px;background:#d6d6d6"></div><div style="position:absolute;left:132px;top:191px;width:1211px;height:23px;background:#d6d6d6"></div><div style="position:absolute;left:131px;top:185px;width:1212px;height:5px;background:#a2a2a2"></div><svg style="position:absolute;left:0px;top:161px;" width="1343" height="23" viewBox="0 0 1343 23"><rect x="220" y="0" width="100" height="23" fill="#c0c0c0"/><rect x="220" y="0" width="1" height="23" fill="#8e8e8e"/><rect x="319" y="0" width="1" height="23" fill="#8e8e8e"/><path d="M221.5 10.6V12.4M222.5 10.6V12.4M223.5 10.6V12.2M224.5 10.8V12.6M225.5 10.3V12.3M226.5 10.1V12.2M227.5 10.1V12.7M228.5 9.2V13.2M229.5 8.8V14.0M230.5 8.9V14.1M231.5 8.7V14.1M232.5 8.7V14.7M233.5 9.2V13.9M234.5 8.4V15.7M235.5 6.6V17.3M236.5 6.2V15.5M237.5 7.8V15.3M238.5 5.0V15.3M239.5 7.2V17.6M240.5 6.0V16.8M241.5 3.4V18.5M242.5 5.9V19.7M243.5 3.5V20.2M244.5 3.4V18.1M245.5 3.4V16.9M246.5 5.5V19.3M247.5 4.0V19.1M248.5 7.2V17.6M249.5 6.8V16.0M250.5 7.7V16.8M251.5 6.6V16.5M252.5 6.7V16.4M253.5 6.0V15.6M254.5 7.3V16.1M255.5 8.6V15.9M256.5 8.6V16.7M257.5 8.7V15.1M258.5 6.5V15.0M259.5 6.2V14.3M260.5 7.3V15.7M261.5 5.9V14.4M262.5 7.6V16.2M263.5 7.6V16.4M264.5 8.0V17.0M265.5 7.7V14.9M266.5 6.8V14.3M267.5 5.9V16.0M268.5 5.9V16.5M269.5 6.9V17.4M270.5 7.8V15.1M271.5 7.1V16.3M272.5 4.0V19.2M273.5 5.7V16.2M274.5 5.9V17.6M275.5 4.5V15.6M276.5 5.2V16.4M277.5 6.2V16.7M278.5 7.1V18.3M279.5 7.2V16.4M280.5 6.8V16.0M281.5 5.9V18.1M282.5 5.7V19.9M283.5 7.3V16.7M284.5 5.2V16.5M285.5 5.2V15.9M286.5 6.6V18.9M287.5 6.0V18.5M288.5 6.1V16.7M289.5 5.4V18.4M290.5 7.0V17.8M291.5 8.2V16.0M292.5 8.5V16.5M293.5 6.6V16.1M294.5 8.5V14.6M295.5 8.1V15.6M296.5 7.9V14.3M297.5 8.6V13.7M298.5 7.7V14.6M299.5 7.9V14.6M300.5 8.6V14.6M301.5 9.3V15.0M302.5 6.7V14.4M303.5 8.1V14.9M304.5 8.6V16.3M305.5 7.9V16.6M306.5 7.7V15.8M307.5 8.8V14.6M308.5 9.4V13.5M309.5 9.8V13.9M310.5 9.5V13.8M311.5 10.3V13.2M312.5 10.5V12.4M313.5 10.6V12.4M314.5 10.6V12.4M315.5 10.6V12.4M316.5 10.6V12.4M317.5 10.6V12.4M318.5 10.6V12.4" stroke="#3232c8" stroke-width="1" fill="none" shape-rendering="crispEdges"/><path d="M228.5 10.6V12.4M229.5 10.4V12.6M230.5 10.4V12.6M231.5 10.2V12.8M232.5 9.9V13.1M233.5 9.9V13.1M234.5 9.5V13.5M235.5 9.5V13.5M236.5 9.2V13.8M237.5 8.8V14.2M238.5 8.8V14.2M239.5 8.4V14.6M240.5 8.3V14.7M241.5 8.6V14.4M242.5 8.3V14.7M243.5 8.6V14.4M244.5 8.4V14.6M245.5 8.3V14.7M246.5 8.5V14.5M247.5 8.7V14.3M248.5 9.2V13.8M249.5 9.7V13.3M250.5 9.7V13.3M251.5 9.6V13.4M252.5 9.4V13.6M253.5 9.4V13.6M254.5 9.5V13.5M255.5 9.5V13.5M256.5 9.4V13.6M257.5 9.4V13.6M258.5 9.6V13.4M259.5 9.6V13.4M260.5 9.3V13.7M261.5 9.4V13.6M262.5 9.6V13.4M263.5 9.4V13.6M264.5 9.4V13.6M265.5 9.6V13.4M266.5 9.4V13.6M267.5 9.5V13.5M268.5 9.5V13.5M269.5 9.3V13.7M270.5 9.2V13.8M271.5 8.8V14.2M272.5 8.9V14.1M273.5 8.3V14.7M274.5 8.6V14.4M275.5 8.3V14.7M276.5 8.7V14.3M277.5 8.6V14.4M278.5 8.5V14.5M279.5 8.4V14.6M280.5 8.5V14.5M281.5 8.5V14.5M282.5 8.5V14.5M283.5 8.5V14.5M284.5 8.5V14.5M285.5 8.4V14.6M286.5 8.8V14.2M287.5 8.9V14.1M288.5 9.1V13.9M289.5 9.0V14.0M290.5 9.0V14.0M291.5 9.2V13.8M292.5 9.4V13.6M293.5 9.6V13.4M294.5 9.5V13.5M295.5 9.6V13.4M296.5 9.9V13.1M297.5 9.8V13.2M298.5 9.9V13.1M299.5 10.1V12.9M300.5 10.3V12.7M301.5 9.8V13.2M302.5 9.6V13.4M303.5 9.7V13.3M304.5 9.6V13.4M305.5 9.9V13.1M306.5 9.8V13.2M307.5 10.2V12.8M308.5 10.4V12.6M309.5 10.5V12.5" stroke="#6464dc" stroke-width="1" fill="none" shape-rendering="crispEdges"/></svg><svg style="position:absolute;left:0px;top:191px;" width="1343" height="23" viewBox="0 0 1343 23"><rect x="220" y="0" width="100" height="23" fill="#c0c0c0"/><rect x="220" y="0" width="1" height="23" fill="#8e8e8e"/><rect x="319" y="0" width="1" height="23" fill="#8e8e8e"/><path d="M221.5 10.6V12.4M222.5 10.6V12.5M223.5 10.4V12.3M224.5 10.4V12.5M225.5 10.0V12.8M226.5 10.3V13.3M227.5 9.2V13.3M228.5 8.9V13.3M229.5 7.9V13.5M230.5 7.2V13.6M231.5 6.7V15.1M232.5 6.6V15.4M233.5 7.3V17.3M234.5 7.6V17.0M235.5 6.7V17.0M236.5 4.3V16.5M237.5 6.9V16.8M238.5 4.9V17.0M239.5 3.1V19.1M240.5 4.5V17.1M241.5 2.9V16.7M242.5 4.5V19.0M243.5 4.4V17.2M244.5 5.0V19.2M245.5 3.1V19.2M246.5 5.2V20.0M247.5 5.8V17.3M248.5 9.0V14.9M249.5 7.7V14.0M250.5 7.4V14.2M251.5 6.9V15.3M252.5 7.4V15.6M253.5 6.8V15.0M254.5 8.7V15.1M255.5 7.6V14.6M256.5 8.0V15.8M257.5 7.7V15.2M258.5 8.6V14.4M259.5 7.3V14.3M260.5 8.6V15.1M261.5 8.4V15.9M262.5 7.3V15.0M263.5 6.8V14.3M264.5 7.0V15.2M265.5 7.8V14.9M266.5 8.9V14.5M267.5 8.3V14.1M268.5 8.2V15.2M269.5 7.8V15.8M270.5 7.1V15.4M271.5 7.1V15.8M272.5 6.7V17.8M273.5 4.8V18.7M274.5 5.6V18.1M275.5 3.4V18.1M276.5 4.0V19.3M277.5 3.9V17.7M278.5 2.9V18.9M279.5 5.5V17.7M280.5 4.3V20.1M281.5 4.4V19.9M282.5 4.0V19.6M283.5 6.4V20.5M284.5 4.2V19.9M285.5 3.5V16.9M286.5 5.5V19.1M287.5 5.7V16.7M288.5 5.4V16.0M289.5 4.7V16.9M290.5 5.4V16.4M291.5 7.6V16.6M292.5 6.2V15.9M293.5 6.7V16.5M294.5 6.2V16.6M295.5 6.8V16.7M296.5 7.4V14.3M297.5 8.1V13.8M298.5 8.4V14.7M299.5 9.6V13.7M300.5 8.0V14.7M301.5 6.6V16.4M302.5 6.8V15.1M303.5 6.6V16.1M304.5 7.6V16.4M305.5 8.7V14.6M306.5 8.9V15.0M307.5 9.4V13.8M308.5 9.7V14.6M309.5 8.9V14.1M310.5 9.9V13.5M311.5 9.9V13.0M312.5 10.6V12.7M313.5 10.6V12.4M314.5 10.6V12.4M315.5 10.6V12.4M316.5 10.6V12.4M317.5 10.6V12.4M318.5 10.6V12.4" stroke="#3232c8" stroke-width="1" fill="none" shape-rendering="crispEdges"/><path d="M227.5 10.5V12.5M228.5 10.2V12.8M229.5 10.1V12.9M230.5 10.0V13.0M231.5 9.5V13.5M232.5 9.2V13.8M233.5 9.0V14.0M234.5 8.9V14.1M235.5 8.7V14.3M236.5 8.8V14.2M237.5 8.3V14.7M238.5 8.3V14.7M239.5 8.0V15.0M240.5 8.1V14.9M241.5 8.1V14.9M242.5 8.1V14.9M243.5 7.9V15.1M244.5 8.2V14.8M245.5 8.1V14.9M246.5 8.1V14.9M247.5 9.0V14.0M248.5 10.0V13.0M249.5 9.8V13.2M250.5 9.9V13.1M251.5 9.8V13.2M252.5 9.6V13.4M253.5 9.8V13.2M254.5 9.5V13.5M255.5 9.7V13.3M256.5 9.6V13.4M257.5 9.5V13.5M258.5 9.4V13.6M259.5 9.4V13.6M260.5 9.6V13.4M261.5 9.5V13.5M262.5 9.6V13.4M263.5 9.6V13.4M264.5 9.8V13.2M265.5 9.8V13.2M266.5 9.6V13.4M267.5 9.8V13.2M268.5 9.6V13.4M269.5 9.1V13.9M270.5 9.0V14.0M271.5 8.4V14.6M272.5 8.1V14.9M273.5 8.5V14.5M274.5 8.2V14.8M275.5 8.2V14.8M276.5 8.0V15.0M277.5 7.9V15.1M278.5 8.2V14.8M279.5 8.3V14.7M280.5 8.1V14.9M281.5 8.2V14.8M282.5 8.0V15.0M283.5 8.0V15.0M284.5 8.0V15.0M285.5 8.1V14.9M286.5 8.2V14.8M287.5 8.2V14.8M288.5 8.6V14.4M289.5 8.7V14.3M290.5 8.7V14.3M291.5 8.8V14.2M292.5 8.8V14.2M293.5 9.0V14.0M294.5 9.3V13.7M295.5 9.6V13.4M296.5 9.7V13.3M297.5 10.0V13.0M298.5 10.1V12.9M299.5 10.4V12.6M300.5 9.7V13.3M301.5 9.1V13.9M302.5 9.2V13.8M303.5 9.6V13.4M304.5 9.7V13.3M305.5 9.6V13.4M306.5 9.8V13.2M307.5 10.0V13.0M308.5 10.2V12.8M309.5 10.4V12.6M310.5 10.6V12.4" stroke="#6464dc" stroke-width="1" fill="none" shape-rendering="crispEdges"/></svg><div style="position:absolute;left:5px;top:161px;width:14px;height:15px;box-sizing:border-box;border:1px solid;border-color:#fff #a0a0a0 #a0a0a0 #fff"></div><svg style="position:absolute;left:5px;top:161px;" width="14" height="15" viewBox="0 0 14 15"><path d="M4 4 L11 11 M11 4 L4 11" stroke="#000" stroke-width="1.3"/></svg><div style="position:absolute;left:19px;top:161px;width:81px;height:15px;box-sizing:border-box;border:1px solid;border-color:#fff #a0a0a0 #a0a0a0 #fff"></div><div style="position:absolute;left:5px;top:176px;width:95px;height:1px;background:#a0a0a0"></div><div class="t" style="left:23px;top:163px;font-size:11px;line-height:12px;color:#000;letter-spacing:0.027px;">Bach prélud</div><div class="a" style="left:85px;top:165px;width:0;height:0;border-left:5.5px solid transparent;border-right:5.5px solid transparent;border-top:6px solid #000"></div><div class="t" style="left:8px;top:179px;font-size:11px;line-height:12px;color:#000;letter-spacing:-0.107px;">Stéréo,44100Hz</div><div style="position:absolute;left:24px;top:196px;width:61px;height:18px;box-sizing:border-box;border:1px solid #a6a6a6;box-shadow:inset 1px 1px 0 #fff"></div><svg style="position:absolute;left:48px;top:202px;" width="14" height="8" viewBox="0 0 14 8"><path d="M1 7 L7 1 L13 7 Z" fill="#a8a8a8"/></svg><div class="t" style="left:118px;top:166px;font-size:11px;line-height:12px;color:#000;font-weight:bold;">0</div><div style="position:absolute;left:125.5px;top:171.75px;width:4.5px;height:1.5px;background:#000"></div><div class="t" style="left:118px;top:196px;font-size:11px;line-height:12px;color:#000;font-weight:bold;">0</div><div style="position:absolute;left:125.5px;top:201.75px;width:4.5px;height:1.5px;background:#000"></div>
<div style="position:absolute;left:1px;top:217px;width:1347px;height:228px;box-sizing:border-box;border:1px solid #c6c69e"></div><div style="position:absolute;left:2px;top:218px;width:1345px;height:226px;box-sizing:border-box;border:1px solid #e6e68a"></div><div style="position:absolute;left:3px;top:219px;width:1343px;height:224px;box-sizing:border-box;border:1px solid #ffff80"></div><div style="position:absolute;left:4px;top:220px;width:1341px;height:222px;background:#000"></div><div style="position:absolute;left:5px;top:221px;width:95px;height:219px;background:#f0f0f0"></div><div style="position:absolute;left:101px;top:221px;width:30px;height:219px;background:#f0f0f0"></div><div style="position:absolute;left:101px;top:221px;width:1px;height:219px;background:#fff"></div><div style="position:absolute;left:101px;top:221px;width:30px;height:1px;background:#fff"></div><div style="position:absolute;left:131px;top:221px;width:1px;height:219px;background:#9a9a9a"></div><div style="position:absolute;left:101px;top:327px;width:30px;height:1px;background:#a8a8a8"></div><div style="position:absolute;left:101px;top:328px;width:30px;height:5px;background:#f0f0f0"></div><div style="position:absolute;left:101px;top:333px;width:30px;height:1px;background:#fff"></div><div style="position:absolute;left:132px;top:221px;width:1211px;height:106px;background:#d6d6d6"></div><div style="position:absolute;left:132px;top:334px;width:1211px;height:106px;background:#d6d6d6"></div><div style="position:absolute;left:131px;top:328px;width:1212px;height:5px;background:#a2a2a2"></div><svg style="position:absolute;left:0px;top:221px;" width="1343" height="106" viewBox="0 0 1343 106"><rect x="284" y="0" width="23" height="106" fill="#c0c0c0"/><rect x="284" y="0" width="1" height="106" fill="#8e8e8e"/><rect x="306" y="0" width="1" height="106" fill="#8e8e8e"/><path d="M285.5 25.1V76.0M286.5 26.5V81.6M287.5 28.9V80.4M288.5 28.3V80.0M289.5 35.3V74.5M290.5 30.8V75.6M291.5 34.7V73.5M292.5 35.2V75.2M293.5 37.4V71.2M294.5 34.4V73.4M295.5 30.3V69.9M296.5 30.4V76.7M297.5 24.4V83.2M298.5 25.0V75.9M299.5 32.4V73.8M300.5 34.1V73.4M301.5 32.4V71.2M302.5 31.1V69.3M303.5 31.4V74.4M304.5 35.3V66.8M305.5 37.4V68.0" stroke="#3232c8" stroke-width="1" fill="none" shape-rendering="crispEdges"/><path d="M285.5 44.6V61.4M286.5 44.6V61.4M287.5 43.4V62.6M288.5 42.6V63.4M289.5 43.4V62.6M290.5 42.1V63.9M291.5 45.2V60.8M292.5 44.7V61.3M293.5 46.9V59.1M294.5 45.8V60.2M295.5 44.1V61.9M296.5 43.3V62.7M297.5 43.6V62.4M298.5 42.1V63.9M299.5 44.1V61.9M300.5 44.4V61.6M301.5 45.1V60.9M302.5 45.6V60.4M303.5 45.0V61.0M304.5 45.3V60.7M305.5 46.4V59.6" stroke="#6464dc" stroke-width="1" fill="none" shape-rendering="crispEdges"/><rect x="411" y="0" width="117" height="106" fill="#c0c0c0"/><rect x="411" y="0" width="1" height="106" fill="#8e8e8e"/><rect x="527" y="0" width="1" height="106" fill="#8e8e8e"/><path d="M412.5 52.1V53.9M413.5 52.1V53.8M414.5 52.1V53.9M415.5 52.3V54.1M416.5 52.1V53.9M417.5 52.1V53.9M418.5 52.2V53.9M419.5 52.1V53.9M420.5 52.1V54.0M421.5 52.1V53.9M422.5 52.1V53.9M423.5 52.1V53.9M424.5 52.1V53.9M425.5 51.9V54.2M426.5 51.9V54.1M427.5 49.0V56.1M428.5 45.8V61.1M429.5 47.4V59.4M430.5 46.6V59.4M431.5 47.4V58.4M432.5 46.1V61.8M433.5 43.9V60.4M434.5 47.1V61.5M435.5 45.3V59.8M436.5 46.3V58.8M437.5 47.7V58.0M438.5 44.7V64.5M439.5 44.8V64.6M440.5 41.9V64.2M441.5 44.1V62.1M442.5 43.2V63.0M443.5 43.8V62.8M444.5 44.2V61.8M445.5 43.5V65.6M446.5 42.4V63.1M447.5 39.0V68.7M448.5 42.1V71.5M449.5 41.2V64.2M450.5 42.1V64.9M451.5 41.7V63.2M452.5 41.8V64.9M453.5 37.2V72.9M454.5 38.9V71.3M455.5 36.9V71.6M456.5 42.6V72.3M457.5 38.6V68.2M458.5 41.9V64.7M459.5 39.3V71.7M460.5 33.7V75.7M461.5 34.0V70.6M462.5 32.6V71.0M463.5 37.4V73.5M464.5 39.3V69.1M465.5 37.6V67.5M466.5 39.4V75.1M467.5 32.6V70.7M468.5 36.7V68.9M469.5 38.9V71.5M470.5 39.8V66.6M471.5 39.5V66.5M472.5 38.1V66.0M473.5 37.7V69.3M474.5 31.6V78.7M475.5 25.8V84.1M476.5 31.2V91.9M477.5 31.7V81.3M478.5 35.4V72.9M479.5 31.5V75.1M480.5 25.0V73.6M481.5 29.9V72.8M482.5 29.5V78.7M483.5 25.6V76.0M484.5 29.8V72.0M485.5 34.9V72.0M486.5 33.1V75.7M487.5 26.8V72.2M488.5 24.1V74.2M489.5 22.5V84.4M490.5 29.0V83.6M491.5 25.0V85.0M492.5 33.8V82.7M493.5 29.6V72.8M494.5 24.1V83.6M495.5 17.2V91.0M496.5 11.6V87.3M497.5 25.8V89.5M498.5 21.3V88.7M499.5 22.7V84.2M500.5 30.1V81.2M501.5 22.9V80.4M502.5 16.3V87.3M503.5 25.9V93.5M504.5 19.5V89.9M505.5 30.3V84.5M506.5 26.3V77.2M507.5 27.4V84.1M508.5 20.8V86.9M509.5 21.0V90.1M510.5 17.1V95.8M511.5 16.4V100.7M512.5 23.0V93.6M513.5 23.6V88.3M514.5 25.7V86.5M515.5 14.8V85.5M516.5 23.2V95.7M517.5 26.4V98.9M518.5 17.3V84.6M519.5 29.2V77.5M520.5 30.7V79.5M521.5 29.9V87.5M522.5 20.2V86.8M523.5 19.0V84.4M524.5 10.9V93.2M525.5 13.5V88.2M526.5 14.7V89.7" stroke="#3232c8" stroke-width="1" fill="none" shape-rendering="crispEdges"/><path d="M428.5 52.0V54.0M429.5 51.6V54.4M430.5 51.1V54.9M431.5 50.9V55.1M432.5 50.9V55.1M433.5 50.6V55.4M434.5 50.8V55.2M435.5 50.9V55.1M436.5 50.7V55.3M437.5 51.0V55.0M438.5 50.5V55.5M439.5 50.1V55.9M440.5 49.6V56.4M441.5 49.5V56.5M442.5 49.5V56.5M443.5 49.9V56.1M444.5 49.7V56.3M445.5 49.4V56.6M446.5 48.7V57.3M447.5 48.9V57.1M448.5 48.5V57.5M449.5 49.3V56.7M450.5 49.4V56.6M451.5 49.6V56.4M452.5 48.8V57.2M453.5 48.9V57.1M454.5 48.4V57.6M455.5 48.1V57.9M456.5 48.4V57.6M457.5 48.3V57.7M458.5 48.0V58.0M459.5 48.0V58.0M460.5 47.2V58.8M461.5 46.5V59.5M462.5 46.7V59.3M463.5 47.1V58.9M464.5 47.5V58.5M465.5 47.2V58.8M466.5 47.3V58.7M467.5 47.0V59.0M468.5 46.7V59.3M469.5 46.5V59.5M470.5 47.2V58.8M471.5 47.8V58.2M472.5 47.3V58.7M473.5 46.1V59.9M474.5 45.5V60.5M475.5 44.4V61.6M476.5 45.5V60.5M477.5 45.6V60.4M478.5 45.6V60.4M479.5 45.6V60.4M480.5 45.3V60.7M481.5 43.6V62.4M482.5 43.6V62.4M483.5 43.8V62.2M484.5 45.1V60.9M485.5 46.2V59.8M486.5 46.4V59.6M487.5 45.4V60.6M488.5 44.0V62.0M489.5 43.3V62.7M490.5 43.3V62.7M491.5 43.7V62.3M492.5 44.5V61.5M493.5 44.4V61.6M494.5 43.2V62.8M495.5 42.1V63.9M496.5 41.0V65.0M497.5 41.2V64.8M498.5 42.4V63.6M499.5 43.2V62.8M500.5 43.2V62.8M501.5 43.5V62.5M502.5 42.2V63.8M503.5 42.7V63.3M504.5 43.1V62.9M505.5 43.7V62.3M506.5 44.4V61.6M507.5 43.6V62.4M508.5 42.9V63.1M509.5 40.7V65.3M510.5 41.4V64.6M511.5 40.4V65.6M512.5 42.0V64.0M513.5 42.8V63.2M514.5 42.8V63.2M515.5 42.3V63.7M516.5 40.4V65.6M517.5 40.0V66.0M518.5 41.8V64.2M519.5 42.5V63.5M520.5 43.2V62.8M521.5 42.6V63.4M522.5 41.9V64.1M523.5 41.5V64.5M524.5 41.3V64.7M525.5 41.2V64.8M526.5 41.5V64.5" stroke="#6464dc" stroke-width="1" fill="none" shape-rendering="crispEdges"/><rect x="660" y="0" width="57" height="106" fill="#c0c0c0"/><rect x="660" y="0" width="1" height="106" fill="#8e8e8e"/><rect x="716" y="0" width="1" height="106" fill="#8e8e8e"/><path d="M661.5 52.1V53.9M662.5 52.1V53.8M663.5 52.2V53.8M664.5 52.1V53.9M665.5 52.1V53.9M666.5 52.1V53.9M667.5 52.1V53.9M668.5 52.2V53.8M669.5 52.1V53.9M670.5 52.1V53.9M671.5 52.2V53.8M672.5 52.1V53.9M673.5 52.1V53.9M674.5 52.1V53.9M675.5 52.1V53.9M676.5 52.1V53.9M677.5 51.4V54.8M678.5 50.2V55.5M679.5 46.1V59.3M680.5 49.1V56.8M681.5 51.4V54.6M682.5 51.5V54.5M683.5 51.7V54.3M684.5 49.9V56.0M685.5 48.3V57.8M686.5 49.2V56.6M687.5 50.2V55.7M688.5 49.6V56.1M689.5 49.1V56.7M690.5 46.5V59.5M691.5 44.5V61.9M692.5 43.4V63.5M693.5 42.4V64.4M694.5 40.9V64.4M695.5 39.7V65.2M696.5 41.2V67.0M697.5 40.3V64.7M698.5 44.7V61.7M699.5 49.0V57.3M700.5 47.4V58.5M701.5 46.4V59.1M702.5 47.7V58.2M703.5 48.9V57.6M704.5 50.1V55.8M705.5 51.6V54.2M706.5 49.8V56.0M707.5 48.2V57.2M708.5 48.4V57.9M709.5 47.4V58.5M710.5 47.5V58.2M711.5 48.4V57.5M712.5 50.2V55.6M713.5 51.6V54.3M714.5 50.4V55.3M715.5 49.5V56.3" stroke="#3232c8" stroke-width="1" fill="none" shape-rendering="crispEdges"/><path d="M678.5 51.9V54.1M679.5 50.3V55.7M680.5 51.2V54.8M684.5 51.8V54.2M685.5 51.3V54.7M686.5 51.5V54.5M687.5 51.9V54.1M688.5 51.6V54.4M689.5 51.5V54.5M690.5 50.6V55.4M691.5 49.5V56.5M692.5 48.8V57.2M693.5 48.4V57.6M694.5 47.4V58.6M695.5 47.1V58.9M696.5 47.7V58.3M697.5 47.8V58.2M698.5 49.3V56.7M699.5 51.2V54.8M700.5 50.9V55.1M701.5 50.5V55.5M702.5 50.9V55.1M703.5 51.1V54.9M704.5 51.8V54.2M706.5 51.8V54.2M707.5 51.3V54.7M708.5 51.0V55.0M709.5 50.7V55.3M710.5 50.8V55.2M711.5 51.0V55.0M712.5 51.7V54.3M714.5 51.9V54.1M715.5 51.6V54.4" stroke="#6464dc" stroke-width="1" fill="none" shape-rendering="crispEdges"/></svg><svg style="position:absolute;left:0px;top:334px;" width="1343" height="106" viewBox="0 0 1343 106"><rect x="284" y="0" width="23" height="106" fill="#c0c0c0"/><rect x="284" y="0" width="1" height="106" fill="#8e8e8e"/><rect x="306" y="0" width="1" height="106" fill="#8e8e8e"/><path d="M285.5 29.0V84.3M286.5 30.9V82.8M287.5 29.2V80.0M288.5 23.2V76.8M289.5 24.0V78.3M290.5 29.9V77.6M291.5 32.4V75.9M292.5 26.3V74.8M293.5 30.8V76.0M294.5 30.0V75.1M295.5 29.3V71.7M296.5 30.0V74.1M297.5 22.0V77.7M298.5 22.8V83.8M299.5 22.4V76.1M300.5 27.7V78.5M301.5 32.3V78.3M302.5 29.3V79.4M303.5 27.9V79.2M304.5 30.3V79.0M305.5 31.7V74.1" stroke="#3232c8" stroke-width="1" fill="none" shape-rendering="crispEdges"/><path d="M285.5 42.1V63.9M286.5 41.8V64.2M287.5 43.7V62.3M288.5 41.5V64.5M289.5 42.2V63.8M290.5 40.9V65.1M291.5 42.4V63.6M292.5 43.8V62.2M293.5 45.4V60.6M294.5 43.9V62.1M295.5 42.4V63.6M296.5 42.7V63.3M297.5 42.2V63.8M298.5 42.2V63.8M299.5 42.5V63.5M300.5 43.4V62.6M301.5 43.0V63.0M302.5 43.9V62.1M303.5 44.3V61.7M304.5 45.3V60.7M305.5 44.0V62.0" stroke="#6464dc" stroke-width="1" fill="none" shape-rendering="crispEdges"/><rect x="411" y="0" width="117" height="106" fill="#c0c0c0"/><rect x="411" y="0" width="1" height="106" fill="#8e8e8e"/><rect x="527" y="0" width="1" height="106" fill="#8e8e8e"/><path d="M412.5 52.1V53.9M413.5 52.4V54.0M414.5 52.2V54.1M415.5 52.1V53.9M416.5 52.1V53.9M417.5 52.1V53.9M418.5 52.1V53.9M419.5 51.9V53.9M420.5 52.0V53.9M421.5 52.1V54.0M422.5 52.2V54.0M423.5 52.1V53.9M424.5 51.9V54.1M425.5 52.1V54.1M426.5 51.7V54.5M427.5 48.4V57.4M428.5 47.5V57.7M429.5 46.6V59.2M430.5 47.0V60.2M431.5 46.4V58.4M432.5 44.9V59.0M433.5 47.2V61.9M434.5 44.9V60.8M435.5 46.5V59.4M436.5 47.1V60.2M437.5 47.9V61.3M438.5 47.5V61.2M439.5 46.8V60.3M440.5 44.6V63.9M441.5 44.6V66.0M442.5 42.4V63.5M443.5 42.9V62.6M444.5 41.3V60.9M445.5 40.7V65.3M446.5 38.5V66.1M447.5 38.9V67.6M448.5 41.3V69.4M449.5 41.2V67.1M450.5 44.4V65.4M451.5 41.1V61.6M452.5 42.9V61.8M453.5 38.7V66.5M454.5 37.6V64.9M455.5 40.5V66.6M456.5 39.6V64.5M457.5 37.2V69.6M458.5 41.8V69.2M459.5 36.0V70.2M460.5 35.2V73.9M461.5 30.9V73.7M462.5 34.3V75.1M463.5 36.4V80.0M464.5 40.3V69.4M465.5 37.9V67.3M466.5 28.8V71.5M467.5 34.6V68.6M468.5 38.4V68.5M469.5 36.7V68.3M470.5 39.4V72.8M471.5 40.8V70.8M472.5 34.4V73.0M473.5 35.8V74.6M474.5 27.9V76.4M475.5 24.5V73.1M476.5 23.6V72.3M477.5 30.3V84.0M478.5 28.7V79.2M479.5 28.2V73.9M480.5 28.8V74.1M481.5 25.2V83.0M482.5 23.8V87.4M483.5 24.5V86.8M484.5 28.1V82.0M485.5 32.7V76.3M486.5 31.4V73.4M487.5 30.0V81.4M488.5 25.7V79.9M489.5 27.7V81.2M490.5 26.1V86.2M491.5 24.2V79.7M492.5 32.5V82.8M493.5 33.7V81.9M494.5 23.5V79.0M495.5 25.4V78.1M496.5 25.2V82.6M497.5 18.4V91.5M498.5 25.0V82.3M499.5 30.2V73.7M500.5 29.3V72.2M501.5 25.6V76.7M502.5 30.3V80.4M503.5 26.2V80.9M504.5 27.4V86.6M505.5 27.3V89.8M506.5 23.8V93.1M507.5 26.9V85.9M508.5 29.1V88.2M509.5 24.3V83.3M510.5 18.0V90.1M511.5 14.1V96.8M512.5 17.7V93.6M513.5 19.6V90.7M514.5 21.2V79.7M515.5 24.3V92.7M516.5 17.2V104.3M517.5 17.4V90.8M518.5 12.0V92.1M519.5 27.8V83.2M520.5 25.8V85.2M521.5 25.8V86.9M522.5 26.6V81.6M523.5 23.9V93.8M524.5 21.9V84.1M525.5 11.5V84.3M526.5 15.0V85.9" stroke="#3232c8" stroke-width="1" fill="none" shape-rendering="crispEdges"/><path d="M428.5 52.0V54.0M429.5 51.5V54.5M430.5 51.3V54.7M431.5 51.0V55.0M432.5 50.9V55.1M433.5 50.7V55.3M434.5 50.5V55.5M435.5 50.8V55.2M436.5 51.0V55.0M437.5 50.9V55.1M438.5 50.4V55.6M439.5 50.2V55.8M440.5 49.5V56.5M441.5 49.5V56.5M442.5 49.8V56.2M443.5 49.7V56.3M444.5 49.4V56.6M445.5 49.5V56.5M446.5 48.6V57.4M447.5 48.6V57.4M448.5 48.8V57.2M449.5 49.0V57.0M450.5 49.4V56.6M451.5 49.2V56.8M452.5 49.1V56.9M453.5 48.8V57.2M454.5 48.2V57.8M455.5 48.2V57.8M456.5 48.5V57.5M457.5 48.4V57.6M458.5 48.1V57.9M459.5 47.3V58.7M460.5 46.7V59.3M461.5 46.2V59.8M462.5 46.9V59.1M463.5 46.7V59.3M464.5 47.3V58.7M465.5 47.5V58.5M466.5 47.6V58.4M467.5 46.3V59.7M468.5 45.9V60.1M469.5 46.7V59.3M470.5 46.7V59.3M471.5 47.2V58.8M472.5 47.6V58.4M473.5 46.4V59.6M474.5 45.5V60.5M475.5 45.4V60.6M476.5 45.5V60.5M477.5 45.8V60.2M478.5 45.6V60.4M479.5 45.6V60.4M480.5 44.5V61.5M481.5 44.6V61.4M482.5 44.6V61.4M483.5 45.0V61.0M484.5 44.7V61.3M485.5 46.2V59.8M486.5 45.6V60.4M487.5 44.9V61.1M488.5 44.6V61.4M489.5 44.2V61.8M490.5 43.2V62.8M491.5 43.9V62.1M492.5 45.0V61.0M493.5 43.7V62.3M494.5 42.5V63.5M495.5 42.6V63.4M496.5 42.1V63.9M497.5 41.9V64.1M498.5 42.9V63.1M499.5 44.0V62.0M500.5 43.7V62.3M501.5 43.6V62.4M502.5 41.7V64.3M503.5 41.4V64.6M504.5 42.5V63.5M505.5 43.5V62.5M506.5 44.4V61.6M507.5 43.7V62.3M508.5 43.4V62.6M509.5 40.7V65.3M510.5 40.7V65.3M511.5 40.9V65.1M512.5 41.2V64.8M513.5 42.5V63.5M514.5 42.2V63.8M515.5 42.0V64.0M516.5 39.9V66.1M517.5 39.7V66.3M518.5 42.2V63.8M519.5 43.0V63.0M520.5 43.1V62.9M521.5 43.3V62.7M522.5 43.1V62.9M523.5 41.6V64.4M524.5 40.3V65.7M525.5 40.4V65.6M526.5 41.6V64.4" stroke="#6464dc" stroke-width="1" fill="none" shape-rendering="crispEdges"/><rect x="660" y="0" width="57" height="106" fill="#c0c0c0"/><rect x="660" y="0" width="1" height="106" fill="#8e8e8e"/><rect x="716" y="0" width="1" height="106" fill="#8e8e8e"/><path d="M661.5 52.2V53.8M662.5 52.1V53.9M663.5 52.1V53.9M664.5 52.2V53.8M665.5 52.1V53.9M666.5 52.1V53.8M667.5 52.1V53.9M668.5 52.1V53.9M669.5 52.1V53.9M670.5 52.1V53.9M671.5 52.1V53.9M672.5 52.1V53.9M673.5 52.1V53.9M674.5 52.1V53.9M675.5 52.1V53.9M676.5 52.2V53.9M677.5 51.4V54.8M678.5 50.5V55.8M679.5 46.9V58.7M680.5 48.8V56.9M681.5 51.4V54.7M682.5 51.5V54.5M683.5 51.8V54.2M684.5 50.4V55.8M685.5 48.3V57.0M686.5 49.5V56.4M687.5 50.6V55.5M688.5 50.0V55.7M689.5 49.4V56.5M690.5 46.3V59.0M691.5 44.5V61.8M692.5 43.6V62.2M693.5 42.5V63.5M694.5 39.1V66.6M695.5 40.2V68.6M696.5 39.8V67.7M697.5 41.7V64.6M698.5 45.6V60.7M699.5 49.1V56.9M700.5 48.2V57.8M701.5 46.3V58.8M702.5 47.2V58.6M703.5 48.9V57.9M704.5 50.3V56.0M705.5 51.7V54.3M706.5 50.3V56.0M707.5 48.7V57.6M708.5 47.9V58.6M709.5 46.8V58.4M710.5 48.4V57.5M711.5 49.1V56.8M712.5 50.2V55.7M713.5 51.6V54.2M714.5 50.5V55.6M715.5 49.7V56.9" stroke="#3232c8" stroke-width="1" fill="none" shape-rendering="crispEdges"/><path d="M678.5 51.9V54.1M679.5 50.6V55.4M680.5 51.4V54.6M684.5 51.8V54.2M685.5 51.3V54.7M686.5 51.4V54.6M687.5 51.8V54.2M688.5 51.7V54.3M689.5 51.5V54.5M690.5 50.3V55.7M691.5 49.5V56.5M692.5 48.5V57.5M693.5 48.0V58.0M694.5 47.9V58.1M695.5 46.8V59.2M696.5 47.6V58.4M697.5 47.6V58.4M698.5 49.3V56.7M699.5 51.3V54.7M700.5 50.8V55.2M701.5 50.4V55.6M702.5 50.9V55.1M703.5 51.0V55.0M704.5 51.9V54.1M706.5 51.8V54.2M707.5 51.1V54.9M708.5 50.8V55.2M709.5 50.5V55.5M710.5 50.8V55.2M711.5 51.1V54.9M712.5 51.8V54.2M714.5 52.0V54.0M715.5 51.4V54.6" stroke="#6464dc" stroke-width="1" fill="none" shape-rendering="crispEdges"/></svg><div style="position:absolute;left:5px;top:221px;width:14px;height:15px;box-sizing:border-box;border:1px solid;border-color:#fff #a0a0a0 #a0a0a0 #fff"></div><svg style="position:absolute;left:5px;top:221px;" width="14" height="15" viewBox="0 0 14 15"><path d="M4 4 L11 11 M11 4 L4 11" stroke="#000" stroke-width="1.3"/></svg><div style="position:absolute;left:19px;top:221px;width:81px;height:15px;box-sizing:border-box;border:1px solid;border-color:#fff #a0a0a0 #a0a0a0 #fff"></div><div style="position:absolute;left:5px;top:236px;width:95px;height:1px;background:#a0a0a0"></div><div class="t" style="left:23px;top:223px;font-size:11px;line-height:12px;color:#000;letter-spacing:-0.070px;">9ème s Bee</div><div class="a" style="left:85px;top:225px;width:0;height:0;border-left:5.5px solid transparent;border-right:5.5px solid transparent;border-top:6px solid #000"></div><div class="t" style="left:8px;top:239px;font-size:11px;line-height:12px;color:#000;letter-spacing:-0.107px;">Stéréo,44100Hz</div><div class="t" style="left:8px;top:255px;font-size:11px;line-height:12px;color:#000;letter-spacing:0.095px;">32 bits flottant</div><div style="position:absolute;left:24px;top:422px;width:61px;height:18px;box-sizing:border-box;border:1px solid #a6a6a6;box-shadow:inset 1px 1px 0 #fff"></div><svg style="position:absolute;left:48px;top:428px;" width="14" height="8" viewBox="0 0 14 8"><path d="M1 7 L7 1 L13 7 Z" fill="#a8a8a8"/></svg>
<div style="position:absolute;left:4px;top:446px;width:1341px;height:72px;background:#000"></div><div style="position:absolute;left:5px;top:447px;width:95px;height:69px;background:#c8c8dc"></div><div style="position:absolute;left:101px;top:447px;width:30px;height:69px;background:#c8c8dc"></div><div style="position:absolute;left:101px;top:447px;width:1px;height:69px;background:#fff"></div><div style="position:absolute;left:101px;top:447px;width:30px;height:1px;background:#fff"></div><div style="position:absolute;left:131px;top:447px;width:1px;height:69px;background:#9a9a9a"></div><div style="position:absolute;left:101px;top:483px;width:30px;height:1px;background:#a8a8a8"></div><div style="position:absolute;left:101px;top:484px;width:30px;height:5px;background:#c8c8dc"></div><div style="position:absolute;left:101px;top:489px;width:30px;height:1px;background:#fff"></div><div style="position:absolute;left:132px;top:447px;width:1211px;height:36px;background:#d6d6d6"></div><div style="position:absolute;left:132px;top:490px;width:1211px;height:26px;background:#d6d6d6"></div><div style="position:absolute;left:131px;top:484px;width:1212px;height:5px;background:#a2a2a2"></div><svg style="position:absolute;left:0px;top:447px;" width="1343" height="36" viewBox="0 0 1343 36"><rect x="303" y="0" width="37" height="36" fill="#c0c0c0"/><rect x="303" y="0" width="1" height="36" fill="#8e8e8e"/><rect x="339" y="0" width="1" height="36" fill="#8e8e8e"/><path d="M304.5 17.1V18.9M305.5 17.1V18.9M306.5 17.1V18.9M307.5 17.1V18.9M308.5 17.1V18.9M309.5 17.1V18.9M310.5 17.1V18.9M311.5 17.1V18.9M312.5 17.1V18.9M313.5 17.1V18.9M314.5 17.1V18.9M315.5 17.1V18.9M316.5 17.1V18.9M317.5 17.1V18.9M318.5 17.1V18.9M319.5 17.1V18.9M320.5 17.1V18.9M321.5 17.1V18.9M322.5 17.1V18.9M323.5 17.1V18.9M324.5 17.1V18.9M325.5 17.1V18.9M326.5 17.1V18.9M327.5 17.1V18.9M328.5 17.1V18.9M329.5 17.1V18.9M330.5 17.1V18.9M331.5 17.1V18.9M332.5 17.1V18.9M333.5 17.1V18.9M334.5 17.1V18.9M335.5 17.1V18.9M336.5 17.1V18.9M337.5 17.1V18.9M338.5 17.1V18.9" stroke="#3232c8" stroke-width="1" fill="none" shape-rendering="crispEdges"/><rect x="536" y="0" width="136" height="36" fill="#c0c0c0"/><rect x="536" y="0" width="1" height="36" fill="#8e8e8e"/><rect x="671" y="0" width="1" height="36" fill="#8e8e8e"/><path d="M537.5 17.0V18.9M538.5 17.0V18.9M539.5 17.0V18.8M540.5 16.9V18.9M541.5 17.0V18.9M542.5 16.9V19.0M543.5 16.8V19.3M544.5 16.3V19.3M545.5 16.6V19.5M546.5 16.2V19.4M547.5 16.2V19.9M548.5 16.1V19.8M549.5 16.2V19.9M550.5 16.4V19.6M551.5 16.3V19.5M552.5 16.0V19.6M553.5 16.0V19.6M554.5 15.9V20.0M555.5 16.2V20.0M556.5 15.8V20.1M557.5 16.0V20.0M558.5 15.8V20.2M559.5 15.9V20.2M560.5 15.6V20.4M561.5 16.0V20.3M562.5 15.9V20.3M563.5 15.6V20.1M564.5 15.8V20.3M565.5 15.8V20.5M566.5 15.8V20.0M567.5 15.7V20.0M568.5 15.5V20.2M569.5 15.3V20.4M570.5 15.3V20.3M571.5 15.8V20.3M572.5 16.0V20.2M573.5 15.3V20.5M574.5 15.1V21.0M575.5 14.9V20.8M576.5 14.8V21.4M577.5 14.9V21.5M578.5 14.3V21.6M579.5 14.3V21.8M580.5 12.9V23.2M581.5 11.9V23.2M582.5 11.7V24.0M583.5 12.9V23.6M584.5 11.1V23.5M585.5 11.4V23.5M586.5 12.4V23.7M587.5 11.5V24.3M588.5 11.2V25.5M589.5 12.0V24.2M590.5 10.9V25.5M591.5 12.1V25.3M592.5 10.7V25.1M593.5 10.7V25.7M594.5 10.5V24.1M595.5 11.7V25.6M596.5 10.8V24.3M597.5 10.2V25.6M598.5 11.2V24.9M599.5 11.8V24.7M600.5 11.7V25.0M601.5 11.6V24.0M602.5 12.0V24.2M603.5 12.5V24.3M604.5 12.3V24.9M605.5 12.4V24.3M606.5 12.6V23.3M607.5 11.0V23.9M608.5 12.6V24.2M609.5 12.6V23.4M610.5 11.9V24.7M611.5 11.0V23.6M612.5 11.3V23.3M613.5 11.2V24.2M614.5 10.8V25.2M615.5 10.6V24.2M616.5 11.4V24.9M617.5 15.8V20.9M618.5 15.7V20.7M619.5 15.2V20.3M620.5 15.4V20.7M621.5 15.4V20.7M622.5 15.4V20.2M623.5 15.5V20.4M624.5 15.2V20.8M625.5 15.9V20.2M626.5 16.0V20.5M627.5 16.0V20.3M628.5 15.6V20.5M629.5 15.9V20.7M630.5 15.3V20.4M631.5 15.6V20.7M632.5 15.8V20.7M633.5 15.8V20.4M634.5 15.4V20.4M635.5 15.4V20.2M636.5 16.0V19.9M637.5 15.9V20.4M638.5 15.8V19.9M639.5 15.7V20.4M640.5 16.0V20.3M641.5 15.8V20.2M642.5 15.9V20.3M643.5 15.9V20.7M644.5 15.9V20.0M645.5 15.6V19.9M646.5 15.6V20.5M647.5 15.6V20.2M648.5 15.4V20.2M649.5 15.5V20.6M650.5 15.8V20.3M651.5 16.0V20.4M652.5 15.8V20.4M653.5 15.7V20.2M654.5 16.0V20.5M655.5 16.1V20.3M656.5 16.1V20.6M657.5 15.4V20.2M658.5 15.5V20.3M659.5 15.8V20.1M660.5 16.0V20.6M661.5 15.5V20.7M662.5 15.3V20.7M663.5 15.5V20.1M664.5 15.4V20.1M665.5 16.2V20.3M666.5 16.2V19.5M667.5 16.7V19.6M668.5 16.9V19.4M669.5 17.1V19.0M670.5 17.1V18.9" stroke="#3232c8" stroke-width="1" fill="none" shape-rendering="crispEdges"/><path d="M546.5 17.2V18.8M547.5 17.2V18.8M550.5 17.1V18.9M551.5 17.1V18.9M552.5 17.1V18.9M553.5 17.1V18.9M554.5 17.1V18.9M555.5 17.1V18.9M556.5 17.1V18.9M557.5 17.1V18.9M558.5 17.0V19.0M559.5 17.0V19.0M560.5 17.0V19.0M561.5 17.1V18.9M562.5 17.0V19.0M563.5 17.0V19.0M564.5 16.9V19.1M565.5 16.9V19.1M566.5 17.0V19.0M567.5 16.9V19.1M568.5 16.9V19.1M569.5 16.9V19.1M570.5 16.8V19.2M571.5 16.8V19.2M572.5 16.7V19.3M573.5 16.9V19.1M574.5 16.7V19.3M575.5 16.8V19.2M576.5 16.5V19.5M577.5 16.4V19.6M578.5 16.3V19.7M579.5 16.0V20.0M580.5 15.9V20.1M581.5 15.7V20.3M582.5 15.2V20.8M583.5 15.4V20.6M584.5 15.1V20.9M585.5 15.2V20.8M586.5 15.2V20.8M587.5 15.1V20.9M588.5 14.9V21.1M589.5 14.6V21.4M590.5 14.6V21.4M591.5 14.6V21.4M592.5 14.8V21.2M593.5 14.6V21.4M594.5 14.6V21.4M595.5 14.9V21.1M596.5 14.8V21.2M597.5 15.0V21.0M598.5 14.8V21.2M599.5 14.7V21.3M600.5 15.1V20.9M601.5 14.7V21.3M602.5 15.1V20.9M603.5 15.0V21.0M604.5 15.0V21.0M605.5 15.0V21.0M606.5 14.9V21.1M607.5 14.9V21.1M608.5 15.1V20.9M609.5 14.9V21.1M610.5 15.1V20.9M611.5 15.0V21.0M612.5 15.2V20.8M613.5 15.1V20.9M614.5 15.1V20.9M615.5 15.0V21.0M616.5 15.1V20.9M617.5 16.9V19.1M618.5 16.8V19.2M619.5 16.9V19.1M620.5 16.8V19.2M621.5 16.8V19.2M622.5 16.8V19.2M623.5 16.8V19.2M624.5 16.8V19.2M625.5 16.9V19.1M626.5 16.8V19.2M627.5 16.9V19.1M628.5 16.9V19.1M629.5 16.8V19.2M630.5 17.0V19.0M631.5 16.9V19.1M632.5 17.0V19.0M633.5 16.9V19.1M634.5 16.9V19.1M635.5 16.9V19.1M636.5 16.9V19.1M637.5 16.9V19.1M638.5 16.8V19.2M639.5 17.0V19.0M640.5 16.8V19.2M641.5 16.9V19.1M642.5 16.9V19.1M643.5 16.9V19.1M644.5 17.0V19.0M645.5 16.9V19.1M646.5 16.9V19.1M647.5 17.0V19.0M648.5 16.9V19.1M649.5 17.0V19.0M650.5 16.8V19.2M651.5 16.9V19.1M652.5 17.0V19.0M653.5 17.0V19.0M654.5 16.9V19.1M655.5 16.9V19.1M656.5 16.9V19.1M657.5 16.9V19.1M658.5 16.9V19.1M659.5 16.9V19.1M660.5 16.9V19.1M661.5 16.9V19.1M662.5 16.8V19.2M663.5 16.9V19.1M664.5 17.0V19.0M665.5 17.0V19.0M666.5 17.2V18.8" stroke="#6464dc" stroke-width="1" fill="none" shape-rendering="crispEdges"/></svg><svg style="position:absolute;left:0px;top:490px;" width="1343" height="26" viewBox="0 0 1343 26"><rect x="303" y="0" width="37" height="26" fill="#c0c0c0"/><rect x="303" y="0" width="1" height="26" fill="#8e8e8e"/><rect x="339" y="0" width="1" height="26" fill="#8e8e8e"/><path d="M304.5 12.1V13.9M305.5 12.1V13.9M306.5 12.1V13.9M307.5 12.1V13.9M308.5 12.1V13.9M309.5 12.1V13.9M310.5 12.1V13.9M311.5 12.1V13.9M312.5 12.1V13.9M313.5 12.1V13.9M314.5 12.1V13.9M315.5 12.1V13.9M316.5 12.1V13.9M317.5 12.1V13.9M318.5 12.1V13.9M319.5 12.1V13.9M320.5 12.1V13.9M321.5 12.1V13.9M322.5 12.1V13.9M323.5 12.1V13.9M324.5 12.1V13.9M325.5 12.1V13.9M326.5 12.1V13.9M327.5 12.1V13.9M328.5 12.1V13.9M329.5 12.1V13.9M330.5 12.1V13.9M331.5 12.1V13.9M332.5 12.1V13.9M333.5 12.1V13.9M334.5 12.1V13.9M335.5 12.1V13.9M336.5 12.1V13.9M337.5 12.1V13.9M338.5 12.1V13.9" stroke="#3232c8" stroke-width="1" fill="none" shape-rendering="crispEdges"/><rect x="536" y="0" width="136" height="26" fill="#c0c0c0"/><rect x="536" y="0" width="1" height="26" fill="#8e8e8e"/><rect x="671" y="0" width="1" height="26" fill="#8e8e8e"/><path d="M537.5 12.1V13.9M538.5 12.1V13.9M539.5 12.1V13.9M540.5 12.2V13.8M541.5 12.1V13.9M542.5 12.1V13.9M543.5 12.1V13.9M544.5 12.2V13.9M545.5 11.8V14.0M546.5 11.5V14.8M547.5 11.6V14.7M548.5 11.2V14.4M549.5 11.1V14.7M550.5 11.3V14.9M551.5 11.4V14.8M552.5 11.3V14.6M553.5 11.0V14.6M554.5 11.1V14.7M555.5 11.2V15.0M556.5 11.1V15.0M557.5 11.1V15.0M558.5 11.1V14.6M559.5 11.0V15.0M560.5 11.1V14.8M561.5 11.2V14.7M562.5 11.0V14.5M563.5 11.4V14.7M564.5 11.2V15.1M565.5 11.1V15.2M566.5 11.3V14.9M567.5 10.8V14.6M568.5 11.0V14.9M569.5 10.7V14.7M570.5 10.9V14.7M571.5 11.1V14.6M572.5 10.8V15.0M573.5 11.1V14.9M574.5 11.1V14.9M575.5 10.7V15.0M576.5 10.6V15.0M577.5 10.7V14.9M578.5 10.4V15.4M579.5 9.1V16.2M580.5 8.6V16.8M581.5 9.0V16.5M582.5 9.3V16.8M583.5 9.2V17.8M584.5 9.5V17.2M585.5 8.3V17.4M586.5 9.3V17.9M587.5 8.6V17.4M588.5 8.0V17.0M589.5 8.0V18.0M590.5 8.9V17.9M591.5 8.6V17.4M592.5 8.3V18.2M593.5 7.9V17.3M594.5 7.8V17.6M595.5 7.8V17.3M596.5 8.3V18.3M597.5 8.6V17.9M598.5 7.5V18.2M599.5 7.4V18.0M600.5 7.3V17.6M601.5 8.3V17.9M602.5 8.9V17.1M603.5 8.7V17.0M604.5 7.9V18.4M605.5 8.4V18.4M606.5 7.1V19.1M607.5 8.1V19.4M608.5 7.2V18.0M609.5 6.1V19.7M610.5 5.6V19.0M611.5 6.0V20.0M612.5 5.9V19.9M613.5 6.3V18.9M614.5 6.4V19.9M615.5 7.7V18.1M616.5 7.2V19.0M617.5 10.9V15.1M618.5 10.7V14.9M619.5 11.0V15.0M620.5 10.7V15.0M621.5 11.2V14.9M622.5 10.7V14.8M623.5 11.2V15.3M624.5 11.2V15.4M625.5 11.1V15.0M626.5 10.9V14.8M627.5 10.9V15.4M628.5 10.9V15.2M629.5 11.0V15.1M630.5 11.0V14.9M631.5 10.6V14.8M632.5 10.8V15.2M633.5 10.8V15.1M634.5 10.8V15.1M635.5 10.9V15.4M636.5 11.2V15.0M637.5 11.2V15.1M638.5 11.1V15.3M639.5 11.2V15.1M640.5 10.8V14.9M641.5 11.2V14.9M642.5 11.1V14.8M643.5 11.3V15.2M644.5 10.8V14.9M645.5 10.9V15.2M646.5 11.1V15.4M647.5 11.1V14.9M648.5 11.0V15.2M649.5 10.9V15.0M650.5 10.8V15.0M651.5 10.6V14.8M652.5 10.9V15.0M653.5 10.9V15.2M654.5 10.8V15.4M655.5 11.0V15.2M656.5 10.9V14.9M657.5 11.3V14.8M658.5 11.2V15.0M659.5 11.2V14.7M660.5 11.2V14.9M661.5 11.3V14.9M662.5 11.0V15.0M663.5 11.1V15.2M664.5 10.9V14.9M665.5 11.0V14.9M666.5 11.5V14.9M667.5 11.5V14.6M668.5 11.7V14.4M669.5 11.9V14.1M670.5 12.1V13.9" stroke="#3232c8" stroke-width="1" fill="none" shape-rendering="crispEdges"/><path d="M547.5 12.2V13.8M551.5 12.1V13.9M552.5 12.1V13.9M554.5 12.2V13.8M555.5 12.1V13.9M556.5 12.1V13.9M558.5 12.2V13.8M559.5 12.2V13.8M560.5 12.1V13.9M561.5 12.1V13.9M562.5 12.1V13.9M563.5 12.1V13.9M564.5 12.2V13.8M565.5 12.2V13.8M566.5 12.1V13.9M567.5 12.1V13.9M568.5 12.1V13.9M569.5 12.1V13.9M570.5 12.1V13.9M571.5 12.0V14.0M572.5 12.1V13.9M573.5 12.1V13.9M574.5 12.1V13.9M575.5 12.0V14.0M576.5 12.1V13.9M577.5 12.0V14.0M578.5 11.7V14.3M579.5 11.3V14.7M580.5 11.0V15.0M581.5 10.9V15.1M582.5 11.0V15.0M583.5 10.9V15.1M584.5 10.9V15.1M585.5 11.0V15.0M586.5 11.0V15.0M587.5 11.1V14.9M588.5 11.0V15.0M589.5 11.0V15.0M590.5 10.7V15.3M591.5 10.8V15.2M592.5 10.7V15.3M593.5 10.7V15.3M594.5 10.7V15.3M595.5 10.7V15.3M596.5 10.8V15.2M597.5 10.7V15.3M598.5 10.7V15.3M599.5 10.7V15.3M600.5 10.9V15.1M601.5 10.8V15.2M602.5 10.9V15.1M603.5 10.8V15.2M604.5 10.7V15.3M605.5 10.6V15.4M606.5 10.5V15.5M607.5 10.3V15.7M608.5 10.2V15.8M609.5 10.1V15.9M610.5 9.9V16.1M611.5 10.0V16.0M612.5 10.0V16.0M613.5 10.1V15.9M614.5 10.4V15.6M615.5 10.3V15.7M616.5 10.1V15.9M617.5 12.1V13.9M618.5 12.1V13.9M619.5 12.0V14.0M620.5 12.0V14.0M621.5 12.0V14.0M622.5 12.0V14.0M623.5 12.0V14.0M624.5 12.0V14.0M625.5 12.0V14.0M626.5 12.1V13.9M627.5 12.0V14.0M628.5 12.0V14.0M629.5 12.0V14.0M630.5 12.1V13.9M631.5 12.0V14.0M632.5 12.0V14.0M633.5 12.0V14.0M634.5 12.0V14.0M635.5 12.0V14.0M636.5 12.0V14.0M637.5 12.0V14.0M638.5 12.0V14.0M639.5 12.0V14.0M640.5 12.1V13.9M641.5 12.0V14.0M642.5 12.1V13.9M643.5 12.0V14.0M644.5 12.1V13.9M645.5 12.0V14.0M646.5 12.1V13.9M647.5 12.1V13.9M648.5 12.0V14.0M649.5 12.0V14.0M650.5 12.1V13.9M651.5 12.1V13.9M652.5 12.1V13.9M653.5 12.0V14.0M654.5 12.0V14.0M655.5 12.1V13.9M656.5 12.0V14.0M657.5 12.1V13.9M658.5 12.0V14.0M659.5 12.0V14.0M660.5 12.1V13.9M661.5 12.0V14.0M662.5 12.0V14.0M663.5 12.0V14.0M664.5 12.1V13.9M665.5 12.2V13.8M666.5 12.2V13.8" stroke="#6464dc" stroke-width="1" fill="none" shape-rendering="crispEdges"/></svg><div style="position:absolute;left:5px;top:447px;width:14px;height:15px;box-sizing:border-box;border:1px solid;border-color:#fff #a0a0a0 #a0a0a0 #fff"></div><svg style="position:absolute;left:5px;top:447px;" width="14" height="15" viewBox="0 0 14 15"><path d="M4 4 L11 11 M11 4 L4 11" stroke="#000" stroke-width="1.3"/></svg><div style="position:absolute;left:19px;top:447px;width:81px;height:15px;box-sizing:border-box;border:1px solid;border-color:#fff #a0a0a0 #a0a0a0 #fff"></div><div style="position:absolute;left:5px;top:462px;width:95px;height:1px;background:#a0a0a0"></div><div class="t" style="left:23px;top:449px;font-size:11px;line-height:12px;color:#000;letter-spacing:0.027px;">Bach prélud</div><div class="a" style="left:85px;top:451px;width:0;height:0;border-left:5.5px solid transparent;border-right:5.5px solid transparent;border-top:6px solid #000"></div><div class="t" style="left:8px;top:465px;font-size:11px;line-height:12px;color:#000;letter-spacing:-0.107px;">Stéréo,44100Hz</div><div class="t" style="left:8px;top:481px;font-size:11px;line-height:12px;color:#000;letter-spacing:0.095px;">32 bits flottant</div><div style="position:absolute;left:24px;top:498px;width:61px;height:18px;box-sizing:border-box;border:1px solid #a6a6a6;box-shadow:inset 1px 1px 0 #fff"></div><svg style="position:absolute;left:48px;top:504px;" width="14" height="8" viewBox="0 0 14 8"><path d="M1.500 6.500 L7 1.200 L12.500 6.500 Z" fill="none" stroke="#000" stroke-width="1"/></svg><div class="t" style="left:118px;top:459px;font-size:11px;line-height:12px;color:#000;font-weight:bold;">0</div><div style="position:absolute;left:125.5px;top:463.75px;width:4.5px;height:1.5px;background:#000"></div><div class="t" style="left:118px;top:497px;font-size:11px;line-height:12px;color:#000;font-weight:bold;">0</div><div style="position:absolute;left:125.5px;top:501.75px;width:4.5px;height:1.5px;background:#000"></div>
<div style="position:absolute;left:4px;top:522px;width:1341px;height:44px;background:#000"></div><div style="position:absolute;left:5px;top:523px;width:95px;height:41px;background:#f0f0f0"></div><div style="position:absolute;left:101px;top:523px;width:30px;height:41px;background:#f0f0f0"></div><div style="position:absolute;left:101px;top:523px;width:1px;height:41px;background:#fff"></div><div style="position:absolute;left:101px;top:523px;width:30px;height:1px;background:#fff"></div><div style="position:absolute;left:131px;top:523px;width:1px;height:41px;background:#9a9a9a"></div><div style="position:absolute;left:101px;top:541px;width:30px;height:1px;background:#a8a8a8"></div><div style="position:absolute;left:101px;top:542px;width:30px;height:5px;background:#f0f0f0"></div><div style="position:absolute;left:101px;top:547px;width:30px;height:1px;background:#fff"></div><div style="position:absolute;left:132px;top:523px;width:1211px;height:18px;background:#d6d6d6"></div><div style="position:absolute;left:132px;top:548px;width:1211px;height:16px;background:#d6d6d6"></div><div style="position:absolute;left:131px;top:542px;width:1212px;height:5px;background:#a2a2a2"></div><svg style="position:absolute;left:0px;top:523px;" width="1343" height="18" viewBox="0 0 1343 18"><rect x="131" y="0" width="67" height="18" fill="#c0c0c0"/><rect x="131" y="0" width="1" height="18" fill="#8e8e8e"/><rect x="197" y="0" width="1" height="18" fill="#8e8e8e"/><path d="M132.5 8.1V9.9M133.5 8.1V9.9M134.5 8.1V9.9M135.5 8.1V9.9M136.5 8.1V9.9M137.5 8.1V9.9M138.5 8.1V9.9M139.5 8.1V9.9M140.5 8.1V9.9M141.5 8.1V9.9M142.5 8.1V9.9M143.5 8.1V9.9M144.5 8.1V9.9M145.5 8.1V9.9M146.5 8.1V9.9M147.5 8.1V9.9M148.5 8.1V9.9M149.5 8.1V9.9M150.5 7.5V10.5M151.5 7.0V11.0M152.5 7.5V10.5M153.5 8.1V9.9M154.5 8.1V9.9M155.5 8.1V9.9M156.5 8.1V9.9M157.5 8.1V9.9M158.5 8.1V9.9M159.5 8.1V9.9M160.5 6.4V11.6M161.5 6.0V12.0M162.5 6.4V11.6M163.5 8.1V9.9M164.5 8.1V9.9M165.5 8.1V9.9M166.5 8.1V9.9M167.5 8.1V9.9M168.5 8.1V9.9M169.5 8.1V9.9M170.5 7.5V10.5M171.5 7.0V11.0M172.5 7.5V10.5M173.5 8.1V9.9M174.5 8.1V9.9M175.5 8.1V9.9M176.5 8.1V9.9M177.5 8.1V9.9M178.5 8.1V9.9M179.5 7.0V11.0M180.5 6.1V11.9M181.5 6.1V11.9M182.5 7.0V11.0M183.5 8.1V9.9M184.5 8.1V9.9M185.5 7.3V10.7M186.5 6.6V11.4M187.5 6.6V11.4M188.5 7.3V10.7M189.5 7.5V10.5M190.5 6.6V11.4M191.5 6.1V11.9M192.5 5.9V12.1M193.5 5.8V12.2M194.5 5.9V12.1M195.5 6.1V11.9M196.5 6.6V11.4" stroke="#3232c8" stroke-width="1" fill="none" shape-rendering="crispEdges"/></svg><svg style="position:absolute;left:0px;top:548px;" width="1343" height="16" viewBox="0 0 1343 16"><rect x="131" y="0" width="67" height="16" fill="#c0c0c0"/><rect x="131" y="0" width="1" height="16" fill="#8e8e8e"/><rect x="197" y="0" width="1" height="16" fill="#8e8e8e"/><path d="M132.5 7.1V8.9M133.5 7.1V8.9M134.5 7.1V8.9M135.5 7.1V8.9M136.5 7.1V8.9M137.5 7.1V8.9M138.5 7.1V8.9M139.5 7.1V8.9M140.5 7.1V8.9M141.5 7.1V8.9M142.5 7.1V8.9M143.5 7.1V8.9M144.5 7.1V8.9M145.5 7.1V8.9M146.5 7.1V8.9M147.5 7.1V8.9M148.5 7.1V8.9M149.5 7.1V8.9M150.5 7.1V8.9M151.5 6.5V9.5M152.5 7.1V8.9M153.5 7.1V8.9M154.5 7.1V8.9M155.5 7.1V8.9M156.5 7.1V8.9M157.5 7.1V8.9M158.5 7.1V8.9M159.5 7.1V8.9M160.5 5.4V10.6M161.5 5.0V11.0M162.5 5.4V10.6M163.5 7.1V8.9M164.5 7.1V8.9M165.5 7.1V8.9M166.5 7.1V8.9M167.5 7.1V8.9M168.5 7.1V8.9M169.5 7.1V8.9M170.5 7.1V8.9M171.5 7.1V8.9M172.5 7.1V8.9M173.5 7.1V8.9M174.5 7.1V8.9M175.5 7.1V8.9M176.5 7.1V8.9M177.5 7.1V8.9M178.5 7.1V8.9M179.5 6.0V10.0M180.5 5.1V10.9M181.5 5.1V10.9M182.5 6.0V10.0M183.5 7.1V8.9M184.5 7.1V8.9M185.5 6.5V9.5M186.5 5.9V10.1M187.5 5.9V10.1M188.5 6.5V9.5M189.5 6.7V9.3M190.5 5.9V10.1M191.5 5.5V10.5M192.5 5.3V10.7M193.5 5.2V10.8M194.5 5.3V10.7M195.5 5.5V10.5M196.5 5.9V10.1" stroke="#3232c8" stroke-width="1" fill="none" shape-rendering="crispEdges"/></svg><div style="position:absolute;left:5px;top:523px;width:14px;height:15px;box-sizing:border-box;border:1px solid;border-color:#fff #a0a0a0 #a0a0a0 #fff"></div><svg style="position:absolute;left:5px;top:523px;" width="14" height="15" viewBox="0 0 14 15"><path d="M4 4 L11 11 M11 4 L4 11" stroke="#000" stroke-width="1.3"/></svg><div style="position:absolute;left:19px;top:523px;width:81px;height:15px;box-sizing:border-box;border:1px solid;border-color:#fff #a0a0a0 #a0a0a0 #fff"></div><div style="position:absolute;left:5px;top:538px;width:95px;height:1px;background:#a0a0a0"></div><div class="t" style="left:23px;top:525px;font-size:11px;line-height:12px;color:#000;letter-spacing:0.096px;">Vocoder vo</div><div class="a" style="left:85px;top:527px;width:0;height:0;border-left:5.5px solid transparent;border-right:5.5px solid transparent;border-top:6px solid #000"></div><div style="position:absolute;left:24px;top:546px;width:61px;height:18px;box-sizing:border-box;border:1px solid #a6a6a6;box-shadow:inset 1px 1px 0 #fff"></div><svg style="position:absolute;left:48px;top:552px;" width="14" height="8" viewBox="0 0 14 8"><path d="M1 7 L7 1 L13 7 Z" fill="#a8a8a8"/></svg><div class="t" style="left:118px;top:526px;font-size:11px;line-height:12px;color:#000;font-weight:bold;">0</div><div style="position:absolute;left:125.5px;top:531.75px;width:4.5px;height:1.5px;background:#000"></div><div class="t" style="left:118px;top:550px;font-size:11px;line-height:12px;color:#000;font-weight:bold;">0</div><div style="position:absolute;left:125.5px;top:555.75px;width:4.5px;height:1.5px;background:#000"></div>
<div style="position:absolute;left:4px;top:570px;width:1341px;height:50px;background:#000"></div><div style="position:absolute;left:5px;top:571px;width:95px;height:47px;background:#f0f0f0"></div><div style="position:absolute;left:101px;top:571px;width:30px;height:47px;background:#f0f0f0"></div><div style="position:absolute;left:101px;top:571px;width:1px;height:47px;background:#fff"></div><div style="position:absolute;left:101px;top:571px;width:30px;height:1px;background:#fff"></div><div style="position:absolute;left:131px;top:571px;width:1px;height:47px;background:#9a9a9a"></div><div style="position:absolute;left:101px;top:591px;width:30px;height:1px;background:#a8a8a8"></div><div style="position:absolute;left:101px;top:592px;width:30px;height:5px;background:#f0f0f0"></div><div style="position:absolute;left:101px;top:597px;width:30px;height:1px;background:#fff"></div><div style="position:absolute;left:132px;top:571px;width:1211px;height:20px;background:#d6d6d6"></div><div style="position:absolute;left:132px;top:598px;width:1211px;height:20px;background:#d6d6d6"></div><div style="position:absolute;left:131px;top:592px;width:1212px;height:5px;background:#a2a2a2"></div><svg style="position:absolute;left:0px;top:571px;" width="1343" height="20" viewBox="0 0 1343 20"><rect x="158" y="0" width="51" height="20" fill="#c0c0c0"/><rect x="158" y="0" width="1" height="20" fill="#8e8e8e"/><rect x="208" y="0" width="1" height="20" fill="#8e8e8e"/><path d="M159.5 9.1V10.9M160.5 9.1V10.9M161.5 9.1V10.9M162.5 9.1V10.9M163.5 9.1V10.9M164.5 9.1V10.9M165.5 9.1V10.9M166.5 9.1V10.9M167.5 9.1V10.9M168.5 9.1V10.9M169.5 9.1V10.9M170.5 9.1V10.9M171.5 9.1V10.9M172.5 9.1V10.9M173.5 9.1V10.9M174.5 9.0V11.0M175.5 8.1V11.9M176.5 7.7V12.3M177.5 8.0V12.0M178.5 9.0V11.0M179.5 7.9V12.1M180.5 7.3V12.7M181.5 7.8V12.2M182.5 9.0V11.0M183.5 7.7V12.3M184.5 7.0V12.9M185.5 7.6V12.4M186.5 9.0V11.0M187.5 7.5V12.5M188.5 6.8V13.2M189.5 7.4V12.6M190.5 7.5V12.5M191.5 5.8V14.2M192.5 5.4V14.6M193.5 6.5V13.5M194.5 6.5V13.5M195.5 5.4V14.6M196.5 5.8V14.2M197.5 7.5V12.5M198.5 5.8V14.2M199.5 5.4V14.6M200.5 6.5V13.5M201.5 6.5V13.5M202.5 5.4V14.6M203.5 5.8V14.2M204.5 7.5V12.5M205.5 5.8V14.2M206.5 5.4V14.6M207.5 6.5V13.5" stroke="#3232c8" stroke-width="1" fill="none" shape-rendering="crispEdges"/><rect x="215" y="0" width="3" height="20" fill="#c0c0c0"/><rect x="215" y="0" width="1" height="20" fill="#8e8e8e"/><rect x="217" y="0" width="1" height="20" fill="#8e8e8e"/><path d="M216.5 6.0V14.0" stroke="#3232c8" stroke-width="1" fill="none" shape-rendering="crispEdges"/><rect x="217" y="0" width="5" height="20" fill="#c0c0c0"/><rect x="217" y="0" width="1" height="20" fill="#8e8e8e"/><rect x="221" y="0" width="1" height="20" fill="#8e8e8e"/><path d="M218.5 6.0V14.0M219.5 6.0V14.0M220.5 6.0V14.0" stroke="#3232c8" stroke-width="1" fill="none" shape-rendering="crispEdges"/></svg><svg style="position:absolute;left:0px;top:598px;" width="1343" height="20" viewBox="0 0 1343 20"><rect x="158" y="0" width="51" height="20" fill="#c0c0c0"/><rect x="158" y="0" width="1" height="20" fill="#8e8e8e"/><rect x="208" y="0" width="1" height="20" fill="#8e8e8e"/><path d="M159.5 9.1V10.9M160.5 9.1V10.9M161.5 9.1V10.9M162.5 9.1V10.9M163.5 9.1V10.9M164.5 9.1V10.9M165.5 9.1V10.9M166.5 9.1V10.9M167.5 9.1V10.9M168.5 9.1V10.9M169.5 9.1V10.9M170.5 9.1V10.9M171.5 9.1V10.9M172.5 9.1V10.9M173.5 9.1V10.9M174.5 9.0V11.0M175.5 8.1V11.9M176.5 7.7V12.3M177.5 8.0V12.0M178.5 9.0V11.0M179.5 7.9V12.1M180.5 7.3V12.7M181.5 7.8V12.2M182.5 9.0V11.0M183.5 7.7V12.3M184.5 7.0V12.9M185.5 7.6V12.4M186.5 9.0V11.0M187.5 7.5V12.5M188.5 6.8V13.2M189.5 7.4V12.6M190.5 7.5V12.5M191.5 5.8V14.2M192.5 5.4V14.6M193.5 6.5V13.5M194.5 6.5V13.5M195.5 5.4V14.6M196.5 5.8V14.2M197.5 7.5V12.5M198.5 5.8V14.2M199.5 5.4V14.6M200.5 6.5V13.5M201.5 6.5V13.5M202.5 5.4V14.6M203.5 5.8V14.2M204.5 7.5V12.5M205.5 5.8V14.2M206.5 5.4V14.6M207.5 6.5V13.5" stroke="#3232c8" stroke-width="1" fill="none" shape-rendering="crispEdges"/><rect x="215" y="0" width="3" height="20" fill="#c0c0c0"/><rect x="215" y="0" width="1" height="20" fill="#8e8e8e"/><rect x="217" y="0" width="1" height="20" fill="#8e8e8e"/><path d="M216.5 6.0V14.0" stroke="#3232c8" stroke-width="1" fill="none" shape-rendering="crispEdges"/><rect x="217" y="0" width="5" height="20" fill="#c0c0c0"/><rect x="217" y="0" width="1" height="20" fill="#8e8e8e"/><rect x="221" y="0" width="1" height="20" fill="#8e8e8e"/><path d="M218.5 6.0V14.0M219.5 6.0V14.0M220.5 6.0V14.0" stroke="#3232c8" stroke-width="1" fill="none" shape-rendering="crispEdges"/></svg><div style="position:absolute;left:5px;top:571px;width:14px;height:15px;box-sizing:border-box;border:1px solid;border-color:#fff #a0a0a0 #a0a0a0 #fff"></div><svg style="position:absolute;left:5px;top:571px;" width="14" height="15" viewBox="0 0 14 15"><path d="M4 4 L11 11 M11 4 L4 11" stroke="#000" stroke-width="1.3"/></svg><div style="position:absolute;left:19px;top:571px;width:81px;height:15px;box-sizing:border-box;border:1px solid;border-color:#fff #a0a0a0 #a0a0a0 #fff"></div><div style="position:absolute;left:5px;top:586px;width:95px;height:1px;background:#a0a0a0"></div><div class="t" style="left:23px;top:573px;font-size:11px;line-height:12px;color:#000;letter-spacing:0.322px;">KO2D02_1</div><div class="a" style="left:85px;top:575px;width:0;height:0;border-left:5.5px solid transparent;border-right:5.5px solid transparent;border-top:6px solid #000"></div><div style="position:absolute;left:24px;top:600px;width:61px;height:18px;box-sizing:border-box;border:1px solid #a6a6a6;box-shadow:inset 1px 1px 0 #fff"></div><svg style="position:absolute;left:48px;top:606px;" width="14" height="8" viewBox="0 0 14 8"><path d="M1 7 L7 1 L13 7 Z" fill="#a8a8a8"/></svg><div class="t" style="left:118px;top:575px;font-size:11px;line-height:12px;color:#000;font-weight:bold;">0</div><div style="position:absolute;left:125.5px;top:579.75px;width:4.5px;height:1.5px;background:#000"></div><div class="t" style="left:118px;top:602px;font-size:11px;line-height:12px;color:#000;font-weight:bold;">0</div><div style="position:absolute;left:125.5px;top:607.75px;width:4.5px;height:1.5px;background:#000"></div>
<div class="a" style="left:0;top:0;width:1349px;height:631px;overflow:hidden"><div style="position:absolute;left:4px;top:624px;width:1341px;height:8px;background:#000"></div><div style="position:absolute;left:5px;top:625px;width:95px;height:7px;background:#f0f0f0"></div><div style="position:absolute;left:101px;top:625px;width:30px;height:7px;background:#f0f0f0"></div><div style="position:absolute;left:131px;top:625px;width:1px;height:7px;background:#9a9a9a"></div><div style="position:absolute;left:132px;top:625px;width:1211px;height:7px;background:#d6d6d6"></div><div style="position:absolute;left:196px;top:625px;width:44px;height:7px;background:#c0c0c0;border-left:1px solid #8e8e8e;border-right:1px solid #8e8e8e;box-sizing:border-box"></div><div style="position:absolute;left:253px;top:625px;width:18px;height:7px;background:#c0c0c0;border-left:1px solid #8e8e8e;border-right:1px solid #8e8e8e;box-sizing:border-box"></div><div style="position:absolute;left:205px;top:628px;width:1px;height:3px;background:#3232c8"></div><div style="position:absolute;left:207px;top:629px;width:1px;height:2px;background:#3232c8"></div><div style="position:absolute;left:210px;top:629px;width:1px;height:2px;background:#3232c8"></div><div style="position:absolute;left:215px;top:626px;width:1px;height:5px;background:#3232c8"></div><div style="position:absolute;left:217px;top:627px;width:1px;height:4px;background:#3232c8"></div><div style="position:absolute;left:221px;top:629px;width:1px;height:2px;background:#3232c8"></div><div style="position:absolute;left:226px;top:628px;width:1px;height:3px;background:#3232c8"></div><div style="position:absolute;left:5px;top:625px;width:14px;height:7px;box-sizing:border-box;border:1px solid;border-color:#fff #a0a0a0 #a0a0a0 #fff"></div><svg style="position:absolute;left:5px;top:625px;" width="14" height="7" viewBox="0 0 14 7"><path d="M4 4 L8 8 M11 4 L7 8" stroke="#000" stroke-width="1.3"/></svg><div style="position:absolute;left:19px;top:625px;width:81px;height:7px;box-sizing:border-box;border:1px solid;border-color:#fff #a0a0a0 #a0a0a0 #fff"></div><div class="t" style="left:23px;top:627px;font-size:11px;line-height:12px;color:#000;letter-spacing:0.322px;">KO2D02_2</div><div class="a" style="left:85px;top:630px;width:0;height:0;border-left:5.5px solid transparent;border-right:5.5px solid transparent;border-top:6px solid #000"></div></div>
<div style="position:absolute;left:5px;top:270px;width:95px;height:1px;background:#a0a0a0"></div><div style="position:absolute;left:5px;top:286px;width:95px;height:1px;background:#a0a0a0"></div>
<div style="position:absolute;left:5px;top:271px;width:47px;height:15px;box-sizing:border-box;border:1px solid;border-color:#fff #a0a0a0 #a0a0a0 #fff"></div>
<div style="position:absolute;left:52px;top:271px;width:48px;height:15px;box-sizing:border-box;border:1px solid;border-color:#fff #a0a0a0 #a0a0a0 #fff"></div>
<div class="t" style="left:16.5px;top:272px;font-size:11px;line-height:12px;color:#000;letter-spacing:-0.364px;">Muet</div>
<div class="t" style="left:65px;top:272px;font-size:11px;line-height:12px;color:#000;letter-spacing:-0.254px;">Solo</div>
<div style="position:absolute;left:16px;top:307px;width:76px;height:1px;background:#a0a0a0"></div><div style="position:absolute;left:17px;top:302px;width:1px;height:4px;background:#b4b4b4"></div><div style="position:absolute;left:24px;top:303px;width:1px;height:3px;background:#b4b4b4"></div><div style="position:absolute;left:32px;top:303px;width:1px;height:3px;background:#b4b4b4"></div><div style="position:absolute;left:39px;top:303px;width:1px;height:3px;background:#b4b4b4"></div><div style="position:absolute;left:46px;top:303px;width:1px;height:3px;background:#b4b4b4"></div><div style="position:absolute;left:53px;top:303px;width:1px;height:3px;background:#b4b4b4"></div><div style="position:absolute;left:60px;top:303px;width:1px;height:3px;background:#b4b4b4"></div><div style="position:absolute;left:68px;top:303px;width:1px;height:3px;background:#b4b4b4"></div><div style="position:absolute;left:75px;top:303px;width:1px;height:3px;background:#b4b4b4"></div><div style="position:absolute;left:82px;top:303px;width:1px;height:3px;background:#b4b4b4"></div><div style="position:absolute;left:90px;top:302px;width:1px;height:4px;background:#b4b4b4"></div><svg style="position:absolute;left:47px;top:298px;" width="13" height="16" viewBox="0 0 13 16"><path d="M1.500 4 L3.500 1.500 H9.500 L11.500 4 V9.500 L6.500 14.500 L1.500 9.500 Z" fill="#bcbcdc" stroke="#000" stroke-width="1.100"/><path d="M2.700 4.300 L4 2.700 H7 V4 H4.200 V9.500 L2.700 8.500 Z" fill="#fff"/><path d="M4.700 7 H8.700 M4.700 9.500 H8.700" stroke="#9292c4" stroke-width="0.900"/><path d="M4.700 8.250 H8.700" stroke="#f4f4fc" stroke-width="1"/></svg>
<div style="position:absolute;left:17px;top:296px;width:5px;height:1px;background:#000"></div><div style="position:absolute;left:84px;top:296px;width:5px;height:1px;background:#000"></div><div style="position:absolute;left:86px;top:294px;width:1px;height:5px;background:#000"></div>
<div style="position:absolute;left:16px;top:337px;width:76px;height:1px;background:#a0a0a0"></div><div style="position:absolute;left:17px;top:332px;width:1px;height:4px;background:#b4b4b4"></div><div style="position:absolute;left:24px;top:333px;width:1px;height:3px;background:#b4b4b4"></div><div style="position:absolute;left:32px;top:333px;width:1px;height:3px;background:#b4b4b4"></div><div style="position:absolute;left:39px;top:333px;width:1px;height:3px;background:#b4b4b4"></div><div style="position:absolute;left:46px;top:333px;width:1px;height:3px;background:#b4b4b4"></div><div style="position:absolute;left:53px;top:333px;width:1px;height:3px;background:#b4b4b4"></div><div style="position:absolute;left:60px;top:333px;width:1px;height:3px;background:#b4b4b4"></div><div style="position:absolute;left:68px;top:333px;width:1px;height:3px;background:#b4b4b4"></div><div style="position:absolute;left:75px;top:333px;width:1px;height:3px;background:#b4b4b4"></div><div style="position:absolute;left:82px;top:333px;width:1px;height:3px;background:#b4b4b4"></div><div style="position:absolute;left:90px;top:332px;width:1px;height:4px;background:#b4b4b4"></div><svg style="position:absolute;left:47px;top:328px;" width="13" height="16" viewBox="0 0 13 16"><path d="M1.500 4 L3.500 1.500 H9.500 L11.500 4 V9.500 L6.500 14.500 L1.500 9.500 Z" fill="#bcbcdc" stroke="#000" stroke-width="1.100"/><path d="M2.700 4.300 L4 2.700 H7 V4 H4.200 V9.500 L2.700 8.500 Z" fill="#fff"/><path d="M4.700 7 H8.700 M4.700 9.500 H8.700" stroke="#9292c4" stroke-width="0.900"/><path d="M4.700 8.250 H8.700" stroke="#f4f4fc" stroke-width="1"/></svg>
<div class="t" style="left:16px;top:321px;font-size:9px;line-height:10px;color:#000;">G</div><div class="t" style="left:83.5px;top:321px;font-size:9px;line-height:10px;color:#000;">D</div>
<div class="t" style="left:110px;top:223px;font-size:11px;line-height:12px;color:#000;font-weight:bold;letter-spacing:0.236px;">1,0</div>
<div class="t" style="left:110px;top:241px;font-size:11px;line-height:12px;color:#000;letter-spacing:0.236px;">0,5</div>
<div style="position:absolute;left:128px;top:247px;width:2px;height:1px;background:#000"></div>
<div class="t" style="left:109px;top:268px;font-size:11px;line-height:12px;color:#000;font-weight:bold;letter-spacing:0.569px;">0,0</div>
<div style="position:absolute;left:126px;top:273px;width:4px;height:2px;background:#000"></div>
<div class="t" style="left:105px;top:294px;font-size:11px;line-height:12px;color:#000;letter-spacing:0.261px;">-0,5</div>
<div style="position:absolute;left:128px;top:300px;width:2px;height:1px;background:#000"></div>
<div class="t" style="left:105px;top:313px;font-size:11px;line-height:12px;color:#000;font-weight:bold;letter-spacing:0.511px;">-1,0</div>
<div style="position:absolute;left:127px;top:326px;width:4px;height:1px;background:#000"></div>
<div class="t" style="left:110px;top:336px;font-size:11px;line-height:12px;color:#000;font-weight:bold;letter-spacing:0.236px;">1,0</div>
<div class="t" style="left:110px;top:354px;font-size:11px;line-height:12px;color:#000;letter-spacing:0.236px;">0,5</div>
<div style="position:absolute;left:128px;top:360px;width:2px;height:1px;background:#000"></div>
<div class="t" style="left:109px;top:380px;font-size:11px;line-height:12px;color:#000;font-weight:bold;letter-spacing:0.569px;">0,0</div>
<div style="position:absolute;left:126px;top:385px;width:4px;height:2px;background:#000"></div>
<div class="t" style="left:105px;top:407px;font-size:11px;line-height:12px;color:#000;letter-spacing:0.261px;">-0,5</div>
<div style="position:absolute;left:128px;top:413px;width:2px;height:1px;background:#000"></div>
<div class="t" style="left:105px;top:426px;font-size:11px;line-height:12px;color:#000;font-weight:bold;letter-spacing:0.511px;">-1,0</div>
<div style="position:absolute;left:127px;top:439px;width:4px;height:1px;background:#000"></div>
<div style="position:absolute;left:1349px;top:156px;width:17px;height:475px;background:#f0f0f0"></div>
<div style="position:absolute;left:1350px;top:173px;width:15px;height:241px;background:#cdcdcd"></div>
<svg style="position:absolute;left:1349px;top:156px;" width="17" height="17" viewBox="0 0 17 17"><path d="M5 10.800 L8.500 7.300 L12 10.800" stroke="#505050" stroke-width="1.700" fill="none"/></svg>
<svg style="position:absolute;left:1349px;top:614px;" width="17" height="17" viewBox="0 0 17 17"><path d="M5 6.500 L8.500 10 L12 6.500" stroke="#505050" stroke-width="1.700" fill="none"/></svg>
<div style="position:absolute;left:0px;top:631px;width:1366px;height:17px;background:#f0f0f0"></div>
<div style="position:absolute;left:0px;top:631px;width:1366px;height:1px;background:#fff"></div>
<div style="position:absolute;left:152px;top:632px;width:1179px;height:15px;background:#cdcdcd"></div>
<svg style="position:absolute;left:135px;top:631px;" width="17" height="17" viewBox="0 0 17 17"><path d="M10.500 4.500 L6.500 8.500 L10.500 12.500" stroke="#505050" stroke-width="1.600" fill="none"/></svg>
<svg style="position:absolute;left:1332px;top:631px;" width="17" height="17" viewBox="0 0 17 17"><path d="M6.500 4.500 L10.500 8.500 L6.500 12.500" stroke="#505050" stroke-width="1.600" fill="none"/></svg>
<div style="position:absolute;left:0px;top:648px;width:1366px;height:1px;background:#a0a0a0"></div>
<div style="position:absolute;left:0px;top:648px;width:1366px;height:57px;border:1px solid #a0a0a0;border-right:none;box-sizing:border-box"></div>
<div class="grab" style="left:0px;top:648px;width:11px;height:57px"><div class="a" style="left:3px;top:5px;width:4px;height:1px;background:#8c8c8c"></div><div class="a" style="left:3px;top:4px;width:4px;height:1px;background:#fff"></div><div class="a" style="left:3px;top:9px;width:4px;height:1px;background:#8c8c8c"></div><div class="a" style="left:3px;top:8px;width:4px;height:1px;background:#fff"></div><div class="a" style="left:3px;top:13px;width:4px;height:1px;background:#8c8c8c"></div><div class="a" style="left:3px;top:12px;width:4px;height:1px;background:#fff"></div><div class="a" style="left:3px;top:17px;width:4px;height:1px;background:#8c8c8c"></div><div class="a" style="left:3px;top:16px;width:4px;height:1px;background:#fff"></div><div class="a" style="left:3px;top:21px;width:4px;height:1px;background:#8c8c8c"></div><div class="a" style="left:3px;top:20px;width:4px;height:1px;background:#fff"></div><div class="a" style="left:3px;top:25px;width:4px;height:1px;background:#8c8c8c"></div><div class="a" style="left:3px;top:24px;width:4px;height:1px;background:#fff"></div><div class="a" style="left:3px;top:29px;width:4px;height:1px;background:#8c8c8c"></div><div class="a" style="left:3px;top:28px;width:4px;height:1px;background:#fff"></div><div class="a" style="left:3px;top:33px;width:4px;height:1px;background:#8c8c8c"></div><div class="a" style="left:3px;top:32px;width:4px;height:1px;background:#fff"></div><div class="a" style="left:3px;top:37px;width:4px;height:1px;background:#8c8c8c"></div><div class="a" style="left:3px;top:36px;width:4px;height:1px;background:#fff"></div><div class="a" style="left:3px;top:41px;width:4px;height:1px;background:#8c8c8c"></div><div class="a" style="left:3px;top:40px;width:4px;height:1px;background:#fff"></div><div class="a" style="left:3px;top:45px;width:4px;height:1px;background:#8c8c8c"></div><div class="a" style="left:3px;top:44px;width:4px;height:1px;background:#fff"></div><div class="a" style="left:3px;top:49px;width:4px;height:1px;background:#8c8c8c"></div><div class="a" style="left:3px;top:48px;width:4px;height:1px;background:#fff"></div></div>
<div class="t" style="left:12.5px;top:656px;font-size:12px;line-height:14px;color:#000;letter-spacing:-0.052px;">Projet à :</div>
<div style="position:absolute;left:12px;top:673px;width:80px;height:23px;box-sizing:border-box;background:#fff;border:1px solid #7a7a7a"></div>
<div class="t" style="left:18.5px;top:677px;font-size:12px;line-height:14px;color:#000;letter-spacing:0.126px;">44100</div>
<svg style="position:absolute;left:77.5px;top:681.5px;" width="11" height="7" viewBox="0 0 11 7"><path d="M1 1 L5.500 5.500 L10 1" stroke="#404040" stroke-width="1.100" fill="none"/></svg>
<div style="position:absolute;left:98px;top:671px;width:1px;height:27px;background:#a0a0a0"></div>
<div class="t" style="left:108px;top:677.5px;font-size:12px;line-height:14px;color:#000;letter-spacing:-0.030px;">Incrément...</div>
<div style="position:absolute;left:175px;top:678px;width:13px;height:13px;box-sizing:border-box;background:#fff;border:1px solid #333"></div>
<div class="t" style="left:194.5px;top:656px;font-size:12px;line-height:14px;color:#000;letter-spacing:0.139px;">Début de la sélection</div>
<div style="position:absolute;left:194px;top:673px;width:150px;height:21px;box-sizing:border-box;background:#c0c0c0;border:1px solid;border-color:#696969 #fff #fff #696969;box-shadow:inset 1px 1px 0 #a0a0a0"></div><div class="t" style="left:198.2px;top:678px;font-size:12px;line-height:14px;color:#0808c8;">0</div><div class="t" style="left:208.2px;top:678px;font-size:12px;line-height:14px;color:#0808c8;">0</div><div class="t" style="left:233.1px;top:678px;font-size:12px;line-height:14px;color:#0808c8;">0</div><div class="t" style="left:243.3px;top:678px;font-size:12px;line-height:14px;color:#0808c8;">0</div><div class="t" style="left:271px;top:678px;font-size:12px;line-height:14px;color:#0808c8;">0</div><div class="t" style="left:281.2px;top:678px;font-size:12px;line-height:14px;color:#0808c8;">0</div><div class="t" style="left:295px;top:678px;font-size:12px;line-height:14px;color:#0808c8;">0</div><div class="t" style="left:305.2px;top:678px;font-size:12px;line-height:14px;color:#0808c8;">0</div><div class="t" style="left:315.2px;top:678px;font-size:12px;line-height:14px;color:#0808c8;">0</div><div class="t" style="left:220.5px;top:678px;font-size:12px;line-height:14px;color:#000;">h</div><div class="t" style="left:256px;top:678px;font-size:12px;line-height:14px;color:#000;">m</div><div class="t" style="left:290px;top:678px;font-size:12px;line-height:14px;color:#000;">.</div><div class="t" style="left:327.5px;top:678px;font-size:12px;line-height:14px;color:#000;">s</div><div style="position:absolute;left:334px;top:675px;width:9px;height:18px;background:#d6d6d6"></div><svg style="position:absolute;left:334px;top:680px;" width="10" height="8" viewBox="0 0 10 8"><path d="M1.500 2 H9 L5.250 6.200 Z" fill="#000"/></svg>
<div style="position:absolute;left:351px;top:673px;width:150px;height:21px;box-sizing:border-box;background:#c0c0c0;border:1px solid;border-color:#696969 #fff #fff #696969;box-shadow:inset 1px 1px 0 #a0a0a0"></div><div class="t" style="left:355.2px;top:678px;font-size:12px;line-height:14px;color:#0808c8;">0</div><div class="t" style="left:365.2px;top:678px;font-size:12px;line-height:14px;color:#0808c8;">0</div><div class="t" style="left:390.1px;top:678px;font-size:12px;line-height:14px;color:#0808c8;">0</div><div class="t" style="left:400.3px;top:678px;font-size:12px;line-height:14px;color:#0808c8;">0</div><div class="t" style="left:428px;top:678px;font-size:12px;line-height:14px;color:#0808c8;">0</div><div class="t" style="left:438.2px;top:678px;font-size:12px;line-height:14px;color:#0808c8;">0</div><div class="t" style="left:452px;top:678px;font-size:12px;line-height:14px;color:#0808c8;">0</div><div class="t" style="left:462.2px;top:678px;font-size:12px;line-height:14px;color:#0808c8;">0</div><div class="t" style="left:472.2px;top:678px;font-size:12px;line-height:14px;color:#0808c8;">0</div><div class="t" style="left:377.5px;top:678px;font-size:12px;line-height:14px;color:#000;">h</div><div class="t" style="left:413px;top:678px;font-size:12px;line-height:14px;color:#000;">m</div><div class="t" style="left:447px;top:678px;font-size:12px;line-height:14px;color:#000;">.</div><div class="t" style="left:484.5px;top:678px;font-size:12px;line-height:14px;color:#000;">s</div><div style="position:absolute;left:491px;top:675px;width:9px;height:18px;background:#d6d6d6"></div><svg style="position:absolute;left:491px;top:680px;" width="10" height="8" viewBox="0 0 10 8"><path d="M1.500 2 H9 L5.250 6.200 Z" fill="#000"/></svg>
<div style="position:absolute;left:515px;top:673px;width:150px;height:21px;box-sizing:border-box;background:#c0c0c0;border:1px solid;border-color:#696969 #fff #fff #696969;box-shadow:inset 1px 1px 0 #a0a0a0"></div><div class="t" style="left:519.2px;top:678px;font-size:12px;line-height:14px;color:#0808c8;">0</div><div class="t" style="left:529.2px;top:678px;font-size:12px;line-height:14px;color:#0808c8;">0</div><div class="t" style="left:554.1px;top:678px;font-size:12px;line-height:14px;color:#0808c8;">0</div><div class="t" style="left:564.3px;top:678px;font-size:12px;line-height:14px;color:#0808c8;">0</div><div class="t" style="left:592px;top:678px;font-size:12px;line-height:14px;color:#0808c8;">0</div><div class="t" style="left:602.2px;top:678px;font-size:12px;line-height:14px;color:#0808c8;">0</div><div class="t" style="left:616px;top:678px;font-size:12px;line-height:14px;color:#0808c8;">0</div><div class="t" style="left:626.2px;top:678px;font-size:12px;line-height:14px;color:#0808c8;">0</div><div class="t" style="left:636.2px;top:678px;font-size:12px;line-height:14px;color:#0808c8;">0</div><div class="t" style="left:541.5px;top:678px;font-size:12px;line-height:14px;color:#000;">h</div><div class="t" style="left:577px;top:678px;font-size:12px;line-height:14px;color:#000;">m</div><div class="t" style="left:611px;top:678px;font-size:12px;line-height:14px;color:#000;">.</div><div class="t" style="left:648.5px;top:678px;font-size:12px;line-height:14px;color:#000;">s</div><div style="position:absolute;left:655px;top:675px;width:9px;height:18px;background:#d6d6d6"></div><svg style="position:absolute;left:655px;top:680px;" width="10" height="8" viewBox="0 0 10 8"><path d="M1.500 2 H9 L5.250 6.200 Z" fill="#000"/></svg>
<div class="a" style="left:351px;top:656px;width:13px;height:13px;box-sizing:border-box;border:1px solid #333;border-radius:50%;background:#fff"></div><div class="a" style="left:354px;top:659px;width:7px;height:7px;border-radius:50%;background:#333"></div>
<div class="t" style="left:367.5px;top:656px;font-size:12px;line-height:14px;color:#000;letter-spacing:-0.224px;">Fin</div>
<div class="a" style="left:392px;top:656px;width:13px;height:13px;box-sizing:border-box;border:1px solid #333;border-radius:50%;background:#fff"></div>
<div class="t" style="left:408.5px;top:656px;font-size:12px;line-height:14px;color:#000;letter-spacing:0.063px;">Durée</div>
<div style="position:absolute;left:508px;top:671px;width:1px;height:27px;background:#a0a0a0"></div>
<div class="t" style="left:515.5px;top:656px;font-size:12px;line-height:14px;color:#000;letter-spacing:0.121px;">Position audio :</div>
<div style="position:absolute;left:0px;top:705px;width:1366px;height:1px;background:#fff"></div>
<div style="position:absolute;left:0px;top:706px;width:1366px;height:22px;background:#f0f0f0"></div>
<div class="t" style="left:3px;top:711px;font-size:12px;line-height:14px;color:#000;letter-spacing:-0.062px;">Cliquer-glisser pour redimensionner la piste.</div>
<div style="position:absolute;left:910px;top:708px;width:1px;height:19px;background:#d0d0d0"></div>
<div style="position:absolute;left:0px;top:728px;width:1366px;height:40px;background:linear-gradient(90deg,#030303 0.00%,#040404 47.88%,#222222 48.17%,#202020 51.24%,#1c1c1c 54.17%,#12141a 56.00%,#0a0d12 58.57%,#0b0e13 64.42%,#0d0f13 70.28%,#131417 73.94%,#16181b 77.60%,#14161a 81.26%,#1b1e22 84.19%,#0c0d0f 86.75%,#020202 87.85%,#020202 100.00%)"></div>
<svg style="position:absolute;left:16px;top:740px;" width="16" height="16" viewBox="0 0 16 16"><g transform="scale(0.94)"><path d="M0 2.400 L7 1.400 V8 H0 Z M8 1.250 L17 0 V8 H8 Z M0 9 H7 V15.600 L0 14.600 Z M8 9 H17 V17 L8 15.750 Z" fill="#fff"/></g></svg>
<div style="position:absolute;left:48px;top:728px;width:344px;height:40px;background:#353535"></div>
<div class="a" style="left:58px;top:738px;width:20px;height:20px;box-sizing:border-box;border:2.500px solid #f4f4f4;border-radius:50%;box-shadow:0 0 0 1px #8a8a8a,inset 0 0 0 1px #8a8a8a"></div>
<div class="t" style="left:84px;top:740px;font-size:15px;line-height:17px;color:#a9a9a9;letter-spacing:-0.178px;">Posez-moi une question.</div>
<svg style="position:absolute;left:364px;top:738px;" width="14" height="20" viewBox="0 0 14 20"><rect x="4.500" y="1.500" width="5" height="10" rx="2.500" fill="none" stroke="#a8a8a8" stroke-width="1.200"/><path d="M2 8.500 V10 Q2 14 7 14 Q12 14 12 10 V8.500 M7 14 V17.500 M4 17.500 H10" fill="none" stroke="#a8a8a8" stroke-width="1.200"/></svg>
<svg style="position:absolute;left:405px;top:740px;" width="22" height="16" viewBox="0 0 22 16"><rect x="4.800" y="1.600" width="12.400" height="12.800" fill="none" stroke="#fff" stroke-width="1.500"/><path d="M2.500 3.500 H1 V12.500 H2.500 M19.500 3.500 H21 V12.500 H19.500" fill="none" stroke="#fff" stroke-width="1.200"/></svg>
<svg style="position:absolute;left:452px;top:736px;" width="22" height="24" viewBox="0 0 22 24"><path d="M1.500 11 C2.500 3.500 8 1 12 1 C18 1 21 6 21 12.500 V14 H8 C8.500 18 11.500 19.500 14.500 19.500 C16.800 19.500 18.800 18.800 20 18 V22 C18.500 22.800 16.500 23.500 13.500 23.500 C7 23.500 3.500 19.500 3.500 14 C3.500 11 5 8.500 7.500 7 C4.500 7.500 2.500 9 1.500 11 Z M8 10.500 H15.500 C15.500 7.500 13.800 6 11.800 6 C9.800 6 8.300 7.800 8 10.500 Z" fill="#0b79d6" fill-rule="evenodd"/></svg>
<svg style="position:absolute;left:492px;top:738px;" width="24" height="20" viewBox="0 0 24 20"><path d="M1 2.500 Q1 1.500 2 1.500 H8.500 L10 3 H21 Q22 3 22 4 V17.500 Q22 18.500 21 18.500 H2 Q1 18.500 1 17.500 Z" fill="#f6d36d"/><path d="M1 4.500 H22 V17.500 Q22 18.500 21 18.500 H2 Q1 18.500 1 17.500 Z" fill="#fbe394"/><path d="M5 10 H18 V18.500 H14.500 V13.500 H8.500 V18.500 H5 Z" fill="#2aa3e6"/><path d="M5 10 H18 V12 H5 Z" fill="#49b6ee"/><rect x="2.500" y="2.300" width="4.500" height="1" fill="#4aa8dc"/></svg>
<svg style="position:absolute;left:533px;top:735px;" width="23" height="26" viewBox="0 0 23 26"><path d="M7.500 7 C7.500 0.500 15.500 0.500 15.500 7" fill="none" stroke="#fff" stroke-width="1.300"/><path d="M1.500 7 L21.500 5 V24.500 L1.500 21.800 Z" fill="#fff"/><path d="M5 10.200 L10.200 9.700 V14 H5 Z M11.500 9.600 L18 9 V14 H11.500 Z M5 15.200 H10.200 V19.800 L5 19.200 Z M11.500 15.200 H18 V20.800 L11.500 20 Z" fill="#050505"/></svg>
<div style="position:absolute;left:574px;top:736px;width:24px;height:24px;background:#0a72d0"></div>
<svg style="position:absolute;left:574px;top:736px;" width="24" height="24" viewBox="0 0 24 24"><path d="M12 2.500 C9 4 5.500 4.500 3 4.500 C3 13 6 18.500 12 22 C18 18.500 21 13 21 4.500 C18.500 4.500 15 4 12 2.500 Z" fill="#fff"/><path d="M11.300 2 V23 H12.700 V2 Z M2 11.300 H22 V12.700 H2 Z" fill="#0a72d0"/></svg>
<svg style="position:absolute;left:614px;top:734px;" width="28" height="28" viewBox="0 0 28 28"><path d="M3 17 C1 10 8 4.500 15 6 C22 7.500 22 14 18 15.500 C15.500 16.500 16.500 19 18 20 C17 24 6 24.500 3 17 Z" fill="#d9dde4" stroke="#9aa2b0" stroke-width="0.700"/><circle cx="7.500" cy="14" r="1.800" fill="#3b9b3b"/><circle cx="10.500" cy="10" r="1.800" fill="#d23a2a"/><circle cx="15.500" cy="9.500" r="1.800" fill="#e8b62a"/><path d="M25 2 L27 3.500 L17 19 L14.500 21 L15 18 Z" fill="#c9822e"/><path d="M14.500 21 L15 18 L17 19 Z" fill="#3a6fc0"/></svg>
<svg style="position:absolute;left:657px;top:739px;" width="24" height="20" viewBox="0 0 24 20"><g transform="scale(0.9)"><rect x="0.500" y="1.500" width="23" height="16.500" fill="#e9eef4" stroke="#c2c8d0"/><rect x="3" y="4" width="11" height="11.500" fill="#1670d4"/><path d="M15.500 5 H21.500 M15.500 8 H21.500 M15.500 11 H21.500 M15.500 14 H21.500" stroke="#8a96a4" stroke-width="1.200"/></g></svg>
<svg style="position:absolute;left:695px;top:735px;" width="26" height="26" viewBox="0 0 26 26"><defs><linearGradient id="ffg" x1="0" y1="0" x2="0" y2="1"><stop offset="0" stop-color="#e2501a"/><stop offset="0.600" stop-color="#ee7a1c"/><stop offset="1" stop-color="#f4b02a"/></linearGradient><radialGradient id="ffb" cx="0.600" cy="0.300" r="0.800"><stop offset="0" stop-color="#7cc0f4"/><stop offset="1" stop-color="#1e3c98"/></radialGradient></defs><circle cx="14" cy="12" r="9.500" fill="url(#ffb)"/><path d="M4 6 C1 11 1 18 5.500 22 C10 26 18 26 22 21 C25.500 17 25 10 22.500 6.500 C23 10 22 12 20.500 13 C21 17 17.500 20 13.500 19.500 C9 19 6.500 15 8 11 C8.500 9.500 10 8.500 11.500 8.500 C10 7 8 7 7 7.500 C7 6 8 4.500 9 4 C7 4 5 5 4 6 Z" fill="url(#ffg)"/><path d="M10 9.500 C12 9 14 10 14.500 12 C13 11.500 11.500 12 11 13 C9.500 12.500 9.500 10.500 10 9.500 Z" fill="#e8601c"/><path d="M20.500 13 C22 12 23 10 22.500 6.500 C24.500 9 25 14 23.500 18 C23 15.500 22 14 20.500 13 Z" fill="#f8d040"/></svg>
<svg style="position:absolute;left:735px;top:735px;" width="28" height="28" viewBox="0 0 28 28"><path d="M2 8 L15 5.500 V20.500 L2 23.500 Z" fill="#4a7ec8"/><path d="M3.500 10 L8 9.200 V14 L3.500 14.800 Z M9.500 9 L14 8 V13 L9.500 13.800 Z M3.500 16.500 L8 15.700 V20.500 L3.500 21.500 Z M9.500 15.500 L14 14.700 V19.500 L9.500 20.500 Z" fill="#e86a1c"/><path d="M14 3 C19 4 21.500 8 20 14 C19 18 19.500 21 23 22 C19 24.500 15.500 22 16 17 C16.500 12 17 7 14 3 Z" fill="#d8a030"/><circle cx="6" cy="6" r="2.500" fill="#9ec0ee"/><path d="M15 5.500 L19 8 L15 20.500" fill="#2a5ca8"/></svg>
<svg style="position:absolute;left:776px;top:736px;" width="25" height="25" viewBox="0 0 25 25"><circle cx="12.500" cy="12.500" r="11.500" fill="#fff"/><path d="M12.500 1 A11.500 11.500 0 0 1 22.460 6.750 L12.500 6.750 A5.750 5.750 0 0 0 7.520 9.620 L2.540 6.750 A11.500 11.500 0 0 1 12.500 1 Z" fill="#e0402e"/><path d="M22.460 6.750 A11.500 11.500 0 0 1 12.500 24 L17.480 15.380 A5.750 5.750 0 0 0 17.480 9.620 L12.500 6.750 Z" fill="#f6c420"/><path d="M12.500 24 A11.500 11.500 0 0 1 2.540 6.750 L7.520 15.380 A5.750 5.750 0 0 0 17.480 15.380 Z" fill="#38a452"/><circle cx="12.500" cy="12.500" r="5.200" fill="#fff"/><circle cx="12.500" cy="12.500" r="4.200" fill="#4a8af0"/></svg>
<svg style="position:absolute;left:815px;top:735px;" width="26" height="26" viewBox="0 0 26 26"><circle cx="13" cy="13" r="12" fill="#1c2834" stroke="#c8d0da" stroke-width="1.400"/><circle cx="13" cy="13" r="9" fill="#2a6a94"/><circle cx="13" cy="13" r="6" fill="#3aa4e4"/><path d="M5 10 C7 5 12 3 17 5 C12 5 8 7 7 12 Z" fill="#9ad0f0" opacity="0.800"/><path d="M11 10 L16.500 13 L11 16 Z" fill="#1a5e98"/><circle cx="13" cy="13" r="4.500" fill="none" stroke="#7cc4f0" stroke-width="0.800"/></svg>
<svg style="position:absolute;left:856px;top:734px;" width="27" height="28" viewBox="0 0 27 28"><path d="M8 6 H20 L24 10 V27 H8 Z" fill="#e8ecf0" stroke="#9aa4b0" stroke-width="0.800"/><path d="M8 6 H20 V10 H24" fill="none" stroke="#6a7684" stroke-width="0.800"/><rect x="8" y="6" width="12" height="5" fill="#3a4654"/><path d="M11 15.500 H21 M11 18.500 H21 M11 21.500 H21 M11 24.500 H21" stroke="#5a6e88" stroke-width="1.700"/><path d="M1 8 C4 3 9 2 13 5 C10 4.500 6 5.500 4.500 8 C7 6.500 10 6.500 12 8 C8 8 5 9.500 3.500 12 C3 10 2 9 1 8 Z" fill="#dfe6ee"/></svg>
<div style="position:absolute;left:889px;top:728px;width:39px;height:40px;background:#383b40"></div>
<svg style="position:absolute;left:896px;top:738px;" width="24" height="21" viewBox="0 0 24 21"><path d="M3.200 13 C2 5 7 1.500 12 1.500 C17 1.500 22 5 20.800 13" fill="none" stroke="#1a2cb0" stroke-width="1.800"/><path d="M6.500 9 C6.500 5.500 8 4.500 8.500 6.500 C9 3.500 10.500 3 11 5.500 C11.500 2.500 13 2.500 13.500 5.500 C14 3.500 15.500 4 15.500 6.500 C16.500 5 17.500 6 17.500 9 V16 C17.500 18.500 16 19.500 14.500 18.500 C13.500 20 11 20 10 18.500 C8.500 19.500 6.500 18.500 6.500 16 Z" fill="#f8c400"/><path d="M7 8 C8 5 9 6 9 9 M10.500 8 C11 4 12.500 4 13 8 M14.500 9 C15 6 16.500 6 17 9" stroke="#f08a10" stroke-width="1.200" fill="none"/><path d="M6 12.500 C9 10.500 11 14.500 13 12 C15 10 17 13.500 18 12 V14.500 C16 16 14 12.500 12 14.500 C10 16.500 8 13 6 14.500 Z" fill="#e8280a"/><rect x="1" y="9.500" width="5" height="9.500" rx="2.400" fill="#0c1c98"/><rect x="18" y="9.500" width="5" height="9.500" rx="2.400" fill="#0c1c98"/></svg>
<div style="position:absolute;left:488px;top:766px;width:32px;height:2px;background:#a9d6f5"></div>
<div style="position:absolute;left:570px;top:766px;width:32px;height:2px;background:#a9d6f5"></div>
<div style="position:absolute;left:773px;top:766px;width:32px;height:2px;background:#a9d6f5"></div>
<div style="position:absolute;left:813px;top:766px;width:32px;height:2px;background:#a9d6f5"></div>
<div style="position:absolute;left:853px;top:766px;width:22px;height:2px;background:#a9d6f5"></div>
<div style="position:absolute;left:877px;top:766px;width:6px;height:2px;background:#a9d6f5"></div>
<div style="position:absolute;left:888px;top:766px;width:40px;height:2px;background:#a9d6f5"></div>
<div style="position:absolute;left:875px;top:766px;width:2px;height:2px;background:#6a8aa4"></div>
<svg style="position:absolute;left:935px;top:739px;" width="16" height="17" viewBox="0 0 16 17"><path d="M8 0.500 C6 1.800 3.500 2.300 1 2.300 C1 9 3 13.500 8 16.500 C13 13.500 15 9 15 2.300 C12.500 2.300 10 1.800 8 0.500 Z" fill="#fff"/><path d="M7.400 0 V17 H8.600 V0 Z M0 7.400 H16 V8.600 H0 Z" fill="#111"/></svg>
<svg style="position:absolute;left:958px;top:739px;" width="18" height="18" viewBox="0 0 18 18"><path d="M15.500 4 C12 0.500 6 1 3.500 5.500 C1 10 3 15.500 8 16.500 C11.500 17.200 14.500 15.500 16 13 L12.500 11 C11.500 12.500 9.500 13.200 8 12.500 C5.500 11.500 5.500 8 7 6.500 C8.500 5 11 5 12.500 6.500 Z" fill="#d8302a"/><path d="M12 1.500 L13.800 2.500 L8.500 10 L6.500 9 Z" fill="#3a78d8"/><path d="M6.500 9 L8.500 10 L7 16 L1 13.500 Z" fill="#e8c88a"/></svg>
<svg style="position:absolute;left:983px;top:740px;" width="16" height="16" viewBox="0 0 16 16"><rect x="1" y="1" width="14" height="14" fill="#c8c8c8" stroke="#f8f8f8" stroke-width="1.200"/><rect x="2" y="2" width="12" height="8.500" fill="#8a8a8a"/><path d="M2 11 H14 M8 11 V14.500" stroke="#444" stroke-width="1"/><rect x="0.300" y="0.300" width="15.400" height="15.400" fill="none" stroke="#2a3a5a" stroke-width="0.600"/></svg>
<svg style="position:absolute;left:1006px;top:741px;" width="18" height="14" viewBox="0 0 18 14"><path d="M4.500 12.500 C1 12.500 0.500 8 4 7.500 C4 3.500 9 2.500 10.500 5.500 C13 4 16 6 15 8.500 C18 9 17.500 12.500 15 12.500 Z" fill="#8c8c8c"/><path d="M2.500 10 C3 7 6 6.500 7 8 C8 5.500 12 5.500 12.500 8.500" fill="none" stroke="#6a6a6a" stroke-width="0.800"/></svg>
<svg style="position:absolute;left:1031px;top:740px;" width="16" height="16" viewBox="0 0 16 16"><rect width="16" height="16" rx="1.500" fill="#e9731d"/><path d="M8.800 2 C10.500 4 6.500 5.500 8.500 8 M4.500 9.500 H11.500 M5 11.500 C7 12.500 9 12.500 11 11.500 M3.500 13.800 C6.500 14.800 9.500 14.800 12.500 13.800 M11.800 9.500 C13.500 9.500 13.500 11.500 11.500 11.800" fill="none" stroke="#fff" stroke-width="1.100"/></svg>
<svg style="position:absolute;left:1054px;top:740px;" width="17" height="17" viewBox="0 0 17 17"><circle cx="9.500" cy="8" r="7" fill="#2a7ae0"/><path d="M6 3.500 C8 2 11 2 13 4 C11 5 12 7 10 7.500 C8 8 9 5 6 3.500 Z" fill="#8ad0f8"/><path d="M1 6.500 L4.500 6.500 L5.500 11.500 C7 12.500 9 11 9.500 8.500 L9.800 6.500 L8 6.500 L11 2.500 L14 6.500 L12.300 6.500 C12.300 11 10 15.500 6.500 16 C3.500 16.500 1.500 13 1 6.500 Z" fill="#58b82a"/></svg>
<svg style="position:absolute;left:1080px;top:738px;" width="14" height="20" viewBox="0 0 14 20"><rect x="3.500" y="1" width="7" height="6" fill="#d8d8d8" stroke="#f0f0f0" stroke-width="0.800"/><rect x="5" y="2.800" width="1.500" height="1.800" fill="#555"/><rect x="7.500" y="2.800" width="1.500" height="1.800" fill="#555"/><rect x="1.500" y="7" width="11" height="11" rx="2" fill="#bcbcbc"/><path d="M7.500 9 L5 13 H7 L6.500 16 L9 12 H7 Z" fill="#e8e8e8"/><rect x="5.500" y="18" width="3" height="1.500" fill="#9a9a9a"/></svg>
<svg style="position:absolute;left:1103px;top:740px;" width="16" height="16" viewBox="0 0 16 16"><rect width="16" height="16" fill="#27303e"/><path d="M2 8.500 C4.500 4.500 10 4 13.500 6.500 V5 C9 3 4 4 2 8.500 Z M3.500 8.800 C5.500 6 9.500 6 11.500 8.500 C9.500 11.500 5.500 11 3.500 8.800 Z M6 8.500 C7 7.500 8.500 7.500 9.500 8.500 C8.500 9.800 7 9.800 6 8.500 Z M3 10 C6 13.500 11 13 13.500 10 V11.800 C10 14.500 5 14 3 10 Z" fill="#76b900" fill-rule="evenodd"/></svg>
<svg style="position:absolute;left:1127px;top:739px;" width="17" height="18" viewBox="0 0 17 18"><path d="M0.500 6.500 H4 L9.500 1 V17 L4 11.500 H0.500 Z" fill="#d8584a"/><path d="M4 6.500 L9.500 1 V9 Z" fill="#f0a090"/><path d="M11.500 5 Q13.500 9 11.500 13" stroke="#7a2a20" stroke-width="1" fill="none"/><path d="M13.500 4 Q16 9 13.500 14" stroke="#5a2018" stroke-width="0.800" fill="none"/></svg>
<svg style="position:absolute;left:1150px;top:740px;" width="18" height="16" viewBox="0 0 18 16"><g transform="scale(0.8 0.86)"><path d="M1.500 6 H4.500 L9 1.500 V16.500 L4.500 12 H1.500 Z" fill="none" stroke="#fff" stroke-width="1.200"/><path d="M11.500 6 Q13 9 11.500 12" stroke="#fff" stroke-width="1.200" fill="none"/><path d="M14 4 Q16.500 9 14 14" stroke="#fff" stroke-width="1.200" fill="none"/><path d="M16.500 2 Q20 9 16.500 16" stroke="#fff" stroke-width="1.200" fill="none"/></g></svg>
<svg style="position:absolute;left:1175px;top:739px;" width="18" height="18" viewBox="0 0 18 18"><g transform="scale(0.82)"><path d="M5.500 1 L10 3.800 L5.500 6.600 L1 3.800 Z M14.500 1 L19 3.800 L14.500 6.600 L10 3.800 Z M5.500 6.800 L10 9.600 L5.500 12.400 L1 9.600 Z M14.500 6.800 L19 9.600 L14.500 12.400 L10 9.600 Z M10 10.500 L14 13 L10 15.600 L6 13 Z" fill="#fff"/><circle cx="14.500" cy="14.500" r="4.500" fill="#3aa83a" stroke="#0a0a0a" stroke-width="0.600"/><path d="M12.300 14.500 L14 16.200 L16.800 13" stroke="#fff" stroke-width="1.300" fill="none"/></g></svg>
<svg style="position:absolute;left:1199px;top:742px;" width="18" height="13" viewBox="0 0 18 13"><g transform="scale(0.76)"><rect x="8" y="4.500" width="12" height="8" fill="none" stroke="#fff" stroke-width="1.300"/><rect x="20.500" y="7" width="1.500" height="3" fill="#fff"/><path d="M2.500 1 V4 M5.500 1 V4 M1 4 H7 V7 Q7 9 4 9 Q1 9 1 7 Z M4 9 V11 Q4 13 7 13 H8" fill="none" stroke="#fff" stroke-width="1.500"/></g></svg>
<svg style="position:absolute;left:1226px;top:741px;" width="16" height="16" viewBox="0 0 16 16"><g transform="scale(0.82)"><path d="M1.500 16 A14.500 14.500 0 0 1 16 1.500" fill="none" stroke="#c8c8c8" stroke-width="1.300"/><path d="M5.500 16 A10.500 10.500 0 0 1 16 5.500" fill="none" stroke="#c8c8c8" stroke-width="1.300"/><path d="M9.500 16 A6.500 6.500 0 0 1 16 9.500" fill="none" stroke="#c8c8c8" stroke-width="1.300"/><circle cx="15" cy="15" r="1.800" fill="#fff"/></g></svg>
<div class="t" style="left:1177px;width:200px;text-align:center;top:732px;font-size:12px;line-height:14px;color:#fff;letter-spacing:-0.606px;">22:53</div>
<div class="t" style="left:1178.5px;width:200px;text-align:center;top:750px;font-size:12px;line-height:14px;color:#fff;letter-spacing:-0.306px;">15/12/2016</div>
<svg style="position:absolute;left:1324px;top:739px;" width="20" height="20" viewBox="0 0 20 20"><path d="M1.500 1.500 H17.500 V14 H11.500 L9.500 16.500 L7.500 14 H1.500 Z" fill="none" stroke="#fff" stroke-width="1.300"/></svg>
</body></html>
